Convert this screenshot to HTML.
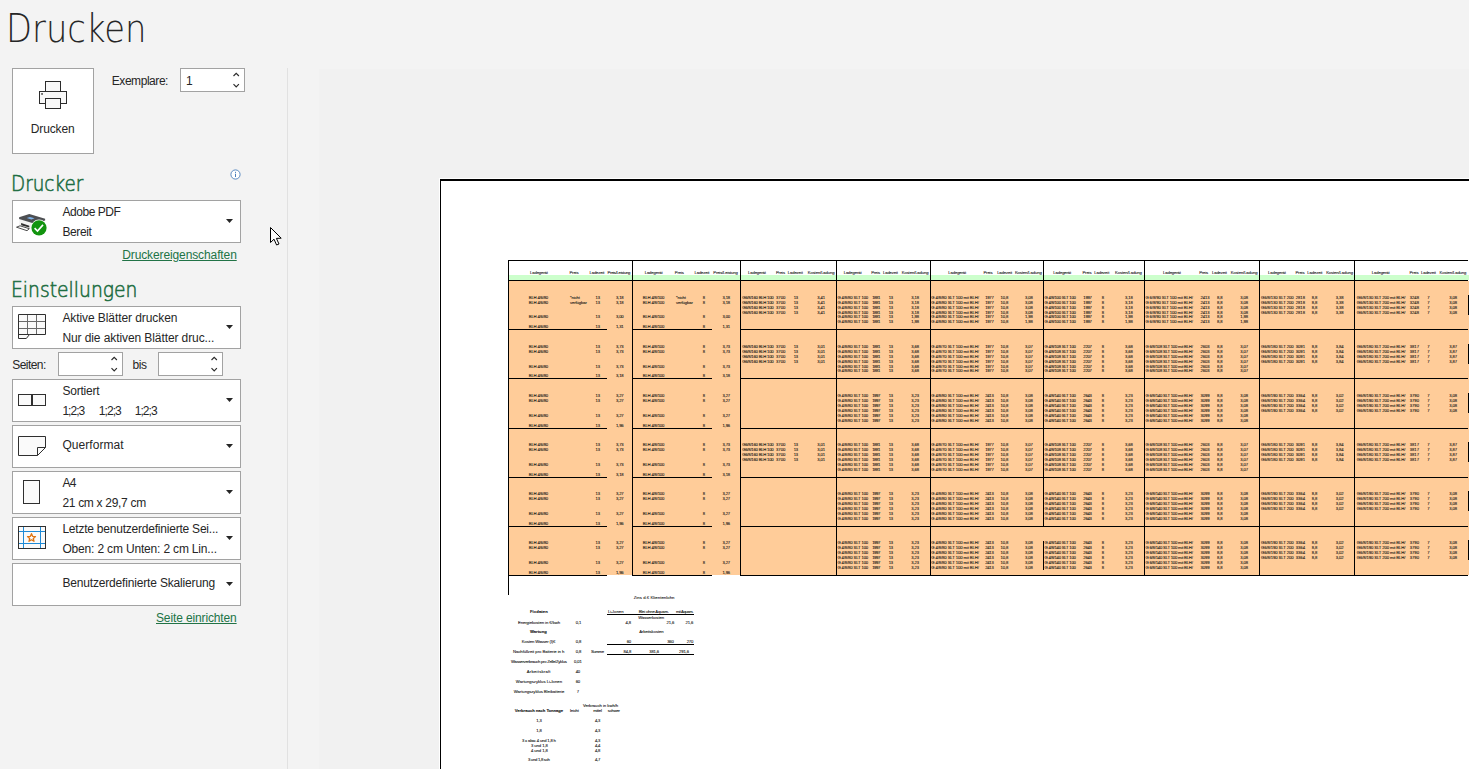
<!DOCTYPE html>
<html lang="de"><head><meta charset="utf-8"><title>Drucken</title>
<style>
*{box-sizing:border-box;margin:0;padding:0}
html,body{width:1469px;height:769px;overflow:hidden;background:#f3f3f3;font-family:"Liberation Sans",sans-serif;color:#262626}
.abs{position:absolute}
.t{position:absolute;white-space:nowrap;font-size:12px;line-height:14px;letter-spacing:-0.3px;color:#262626}
.title{position:absolute;left:5.6px;top:0.7px;font-family:"DejaVu Sans","DejaVu Sans Light","Liberation Sans",sans-serif;font-weight:200;font-size:39.4px;line-height:54px;color:#262626;white-space:nowrap;transform-origin:0 0;transform:scaleX(0.858)}
.h{position:absolute;left:10.6px;font-family:"DejaVu Sans","DejaVu Sans Light","Liberation Sans",sans-serif;font-weight:200;font-size:21px;line-height:28px;color:#1e6e42;-webkit-text-stroke:0.6px #1e6e42;white-space:nowrap;transform-origin:0 0;transform:scaleX(0.84)}
.box{position:absolute;left:12px;width:229px;height:43px;background:#fff;border:1px solid #a2a2a2}
.spin{position:absolute;height:24px;background:#fff;border:1px solid #a2a2a2}
.arr{position:absolute;width:7px;height:4px}
.lnk{position:absolute;white-space:nowrap;font-size:12px;line-height:14px;letter-spacing:-0.15px;color:#217346;text-decoration:underline}
.c{position:absolute;white-space:nowrap;font-size:4.2px;line-height:5px;color:#151515;-webkit-text-stroke:0.09px #151515}
.c.b{font-weight:bold}
.r{position:absolute}
#prev{position:absolute;left:319px;top:69px;width:1150px;height:700px;background:#f1f1f1;overflow:hidden}
#page{position:absolute;left:121px;top:110px;width:1100px;height:700px;background:#fff;border-left:1px solid #000;border-top:2px solid #000;box-shadow:-1px -1px 0 0 #fff}
</style></head>
<body>
<div class="title" id="ttl">Drucken</div>
<div class="abs" style="left:12px;top:68px;width:82px;height:86px;background:#fff;border:1px solid #a2a2a2"></div>
<svg class="abs" style="left:36px;top:80px" width="32" height="30" viewBox="0 0 32 30" fill="none" stroke="#2b2b2b" stroke-width="1">
<rect x="9.5" y="1.5" width="15" height="10" fill="#f8f8f8"/>
<rect x="3.5" y="11.5" width="27" height="12" fill="#f8f8f8"/>
<rect x="9.5" y="18.5" width="15" height="10" fill="#f8f8f8"/>
<rect x="5.3" y="13.2" width="1.5" height="1.5" fill="#1a1a1a" stroke="none"/>
</svg>
<div class="t" style="left:30.8px;top:122px;letter-spacing:-0.13px;">Drucken</div>
<div class="t" style="left:111.8px;top:74px;letter-spacing:-0.45px;">Exemplare:</div>
<div class="spin" style="left:180px;top:68px;width:65px"></div>
<div class="t" style="left:186px;top:74px">1</div>
<svg class="abs" style="left:233px;top:72px" width="7" height="5" viewBox="0 0 7 5" fill="none" stroke="#2b2b2b" stroke-width="1.15"><path d="M0.5 4 L3.2 1.3 L5.9 4"/></svg>
<svg class="abs" style="left:233px;top:83px" width="7" height="5" viewBox="0 0 7 5" fill="none" stroke="#2b2b2b" stroke-width="1.15"><path d="M0.5 1.2 L3.2 3.9 L5.9 1.2"/></svg>
<div class="abs" style="left:287px;top:68px;width:1px;height:701px;background:#e1e1e1"></div>
<div class="h" style="top:170px;transform:scaleX(0.874)">Drucker</div>
<svg class="abs" style="left:230px;top:169px" width="11" height="11" viewBox="0 0 11 11"><circle cx="5.5" cy="5.5" r="4.6" fill="#fff" stroke="#4a7ebb" stroke-width="0.9"/><rect x="5" y="4.7" width="1" height="3.3" fill="#4a7ebb"/><rect x="5" y="2.8" width="1" height="1.1" fill="#4a7ebb"/></svg>
<div class="box" style="top:200px"></div>
<svg class="abs" style="left:16px;top:212px" width="32" height="24" viewBox="0 0 32 24">
<path d="M3.1 7 L3.1 13.6 L13.3 17 L20 15 L29 8.5 L29 6.7 L13.3 2 Z" fill="#f4f4f4"/>
<path d="M3.1 5.3 L13.3 2 L29.1 6.7 L29.1 8.4 L18 11.5 L3.1 7.1 Z" fill="#4d4f52"/>
<path d="M10.7 6.1 L13.9 5 L18.6 6.2 L15.4 7.4 Z" fill="#7fb4ee"/>
<path d="M5.1 11 L13.3 13.7 L13.3 15.6 L5.1 13.2 Z" fill="#2e2e2e"/>
<path d="M0.5 15.2 L4 13.8 L13.3 16.7 L11 18.7 Z" fill="#fdfdfd" stroke="#3a3a3a" stroke-width="0.9"/>
<circle cx="23" cy="15.8" r="8.2" fill="#fff"/>
<circle cx="23" cy="15.8" r="7.6" fill="#12940f"/>
<path d="M18.6 16.1 L21.5 19 L27 12.9" fill="none" stroke="#fff" stroke-width="1.6"/>
</svg>
<div class="t" style="left:62.4px;top:205px;letter-spacing:-0.44px;">Adobe PDF</div>
<div class="t" style="left:62.4px;top:225px;letter-spacing:-0.39px;">Bereit</div>
<svg class="arr" style="left:226px;top:219px" viewBox="0 0 7 4"><path d="M0 0 H7 L3.5 4 Z" fill="#262626"/></svg>
<div class="lnk" style="left:122.2px;top:248px;letter-spacing:-0.11px;">Druckereigenschaften</div>
<svg class="abs" style="left:269px;top:226px" width="15" height="21" viewBox="0 0 15 21"><path d="M1.5 1.5 L1.5 16.5 L5 13.2 L7.6 19 L10 18 L7.4 12.4 L12.2 12.2 Z" fill="#fff" stroke="#000" stroke-width="1" stroke-linejoin="miter"/></svg>
<div class="h" style="top:276px;transform:scaleX(0.893)">Einstellungen</div>
<div class="box" style="top:306px"></div>
<svg class="arr" style="left:226px;top:325px" viewBox="0 0 7 4"><path d="M0 0 H7 L3.5 4 Z" fill="#262626"/></svg>
<div class="box" style="top:379px"></div>
<svg class="arr" style="left:226px;top:398px" viewBox="0 0 7 4"><path d="M0 0 H7 L3.5 4 Z" fill="#262626"/></svg>
<div class="box" style="top:425px"></div>
<svg class="arr" style="left:226px;top:444px" viewBox="0 0 7 4"><path d="M0 0 H7 L3.5 4 Z" fill="#262626"/></svg>
<div class="box" style="top:471px"></div>
<svg class="arr" style="left:226px;top:490px" viewBox="0 0 7 4"><path d="M0 0 H7 L3.5 4 Z" fill="#262626"/></svg>
<div class="box" style="top:517px"></div>
<svg class="arr" style="left:226px;top:536px" viewBox="0 0 7 4"><path d="M0 0 H7 L3.5 4 Z" fill="#262626"/></svg>
<div class="box" style="top:563px"></div>
<svg class="arr" style="left:226px;top:582px" viewBox="0 0 7 4"><path d="M0 0 H7 L3.5 4 Z" fill="#262626"/></svg>
<svg class="abs" style="left:18px;top:314px" width="30" height="26" viewBox="0 0 30 26" fill="none" stroke="#2f2f2f" stroke-width="1">
<path d="M0.5 0.5 H27.5 V20.5 H11.5 L8.3 24.5 H0.5 Z" fill="#fafafa"/>
<path d="M1 7.5 H27 M1 14.5 H27 M9.5 1 V20 M18.5 1 V20" stroke="#6a6a6a"/>
<path d="M0.5 20.5 H11.5"/>
</svg>
<div class="t" style="left:62.4px;top:311px;letter-spacing:-0.08px;">Aktive Blätter drucken</div>
<div class="t" style="left:62.4px;top:331px;letter-spacing:-0.09px;">Nur die aktiven Blätter druc...</div>
<div class="t" style="left:12.2px;top:358px;letter-spacing:-0.54px;">Seiten:</div>
<div class="spin" style="left:58px;top:352px;width:65px"></div>
<svg class="abs" style="left:111px;top:356px" width="7" height="5" viewBox="0 0 7 5" fill="none" stroke="#2b2b2b" stroke-width="1.15"><path d="M0.5 4 L3.2 1.3 L5.9 4"/></svg>
<svg class="abs" style="left:111px;top:367px" width="7" height="5" viewBox="0 0 7 5" fill="none" stroke="#2b2b2b" stroke-width="1.15"><path d="M0.5 1.2 L3.2 3.9 L5.9 1.2"/></svg>
<div class="t" style="left:132.6px;top:358px;letter-spacing:-0.52px;">bis</div>
<div class="spin" style="left:158px;top:352px;width:65px"></div>
<svg class="abs" style="left:211px;top:356px" width="7" height="5" viewBox="0 0 7 5" fill="none" stroke="#2b2b2b" stroke-width="1.15"><path d="M0.5 4 L3.2 1.3 L5.9 4"/></svg>
<svg class="abs" style="left:211px;top:367px" width="7" height="5" viewBox="0 0 7 5" fill="none" stroke="#2b2b2b" stroke-width="1.15"><path d="M0.5 1.2 L3.2 3.9 L5.9 1.2"/></svg>
<svg class="abs" style="left:18px;top:394px" width="30" height="14" viewBox="0 0 30 14" fill="#fafafa" stroke="#2f2f2f" stroke-width="1"><rect x="0.5" y="0.5" width="13" height="11"/><rect x="14.5" y="0.5" width="13" height="11"/></svg>
<div class="t" style="left:62.4px;top:384px;letter-spacing:-0.21px;">Sortiert</div>
<div class="t" style="left:62.4px;top:404px;letter-spacing:-0.95px;">1;2;3</div>
<div class="t" style="left:98.8px;top:404px;letter-spacing:-0.95px;">1;2;3</div>
<div class="t" style="left:134.7px;top:404px;letter-spacing:-0.95px;">1;2;3</div>
<svg class="abs" style="left:18px;top:436px" width="30" height="22" viewBox="0 0 30 22" fill="#fafafa" stroke="#2f2f2f" stroke-width="1"><path d="M0.5 0.5 H27.5 V11.5 L19.5 19.5 H0.5 Z"/><path d="M27.5 11.5 H19.5 V19.5" fill="none"/></svg>
<div class="t" style="left:62.4px;top:438px;letter-spacing:0.05px;">Querformat</div>
<svg class="abs" style="left:23px;top:480px" width="19" height="26" viewBox="0 0 19 26" fill="#fafafa" stroke="#2f2f2f" stroke-width="1"><rect x="0.5" y="0.5" width="16" height="23"/></svg>
<div class="t" style="left:62.4px;top:476px;letter-spacing:-0.68px;">A4</div>
<div class="t" style="left:62.4px;top:496px;letter-spacing:-0.30px;">21 cm x 29,7 cm</div>
<svg class="abs" style="left:18px;top:526px" width="30" height="24" viewBox="0 0 30 24" fill="none" stroke-width="1">
<rect x="0.5" y="0.5" width="27" height="22" fill="#fafafa" stroke="#2f2f2f"/>
<path d="M5.5 1 V22 M22.5 1 V22 M1 5.5 H27 M1 17.5 H27" stroke="#1e8ad6"/>
<path d="M13.50 7.70 L14.62 10.36 L17.49 10.60 L15.31 12.49 L15.97 15.30 L13.50 13.80 L11.03 15.30 L11.69 12.49 L9.51 10.60 L12.38 10.36 Z" stroke="#e07410" stroke-width="1.3" stroke-linejoin="round" fill="#fafafa"/>
</svg>
<div class="t" style="left:62.4px;top:522px;letter-spacing:-0.22px;">Letzte benutzerdefinierte Sei...</div>
<div class="t" style="left:62.4px;top:542px;letter-spacing:-0.17px;">Oben: 2 cm Unten: 2 cm Lin...</div>
<div class="t" style="left:62.4px;top:576px;letter-spacing:-0.17px;">Benutzerdefinierte Skalierung</div>
<div class="lnk" style="left:156px;top:611px;letter-spacing:-0.13px;">Seite einrichten</div>
<div id="prev"><div id="page"><div class="abs" style="left:-441px;top:-181px;width:1469px;height:769px">
<div class="r" style="left:509px;top:261px;width:960px;height:14px;background:#fff"></div>
<div class="r" style="left:509px;top:275px;width:960px;height:5px;background:#ccffcc"></div>
<div class="r" style="left:509px;top:281px;width:960px;height:294px;background:#ffcc99"></div>
<div class="r" style="left:508px;top:260px;width:960px;height:1px;background:#000"></div>
<div class="r" style="left:508px;top:280px;width:960px;height:1px;background:#000"></div>
<div class="r" style="left:508px;top:329px;width:99px;height:1px;background:#000"></div>
<div class="r" style="left:632px;top:329px;width:80px;height:1px;background:#000"></div>
<div class="r" style="left:740px;top:329px;width:728px;height:1px;background:#000"></div>
<div class="r" style="left:508px;top:378px;width:99px;height:1px;background:#000"></div>
<div class="r" style="left:632px;top:378px;width:80px;height:1px;background:#000"></div>
<div class="r" style="left:740px;top:378px;width:728px;height:1px;background:#000"></div>
<div class="r" style="left:508px;top:428px;width:99px;height:1px;background:#000"></div>
<div class="r" style="left:632px;top:428px;width:80px;height:1px;background:#000"></div>
<div class="r" style="left:740px;top:428px;width:728px;height:1px;background:#000"></div>
<div class="r" style="left:508px;top:477px;width:99px;height:1px;background:#000"></div>
<div class="r" style="left:632px;top:477px;width:80px;height:1px;background:#000"></div>
<div class="r" style="left:740px;top:477px;width:728px;height:1px;background:#000"></div>
<div class="r" style="left:508px;top:526px;width:99px;height:1px;background:#000"></div>
<div class="r" style="left:632px;top:526px;width:80px;height:1px;background:#000"></div>
<div class="r" style="left:740px;top:526px;width:728px;height:1px;background:#000"></div>
<div class="r" style="left:508px;top:575px;width:99px;height:1px;background:#000"></div>
<div class="r" style="left:632px;top:575px;width:80px;height:1px;background:#000"></div>
<div class="r" style="left:740px;top:575px;width:728px;height:1px;background:#000"></div>
<div class="r" style="left:508px;top:260px;width:1px;height:316px;background:#000"></div>
<div class="r" style="left:632px;top:260px;width:1px;height:316px;background:#000"></div>
<div class="r" style="left:740px;top:260px;width:1px;height:316px;background:#000"></div>
<div class="r" style="left:836px;top:260px;width:1px;height:316px;background:#000"></div>
<div class="r" style="left:930px;top:260px;width:1px;height:316px;background:#000"></div>
<div class="r" style="left:1043px;top:260px;width:1px;height:267px;background:#000"></div>
<div class="r" style="left:1043px;top:541px;width:1px;height:29px;background:#000"></div>
<div class="r" style="left:1144px;top:260px;width:1px;height:316px;background:#000"></div>
<div class="r" style="left:1259px;top:260px;width:1px;height:316px;background:#000"></div>
<div class="r" style="left:1354px;top:260px;width:1px;height:316px;background:#000"></div>
<div class="r" style="left:508px;top:576px;width:1px;height:19px;background:#000"></div>
<div class="r" style="left:1468px;top:295px;width:1px;height:20px;background:#000"></div>
<div class="r" style="left:1468px;top:344px;width:1px;height:20px;background:#000"></div>
<div class="r" style="left:1468px;top:393px;width:1px;height:20px;background:#000"></div>
<div class="r" style="left:1468px;top:442px;width:1px;height:20px;background:#000"></div>
<div class="r" style="left:1468px;top:491px;width:1px;height:20px;background:#000"></div>
<div class="r" style="left:1468px;top:540px;width:1px;height:20px;background:#000"></div>
<div class="c" style="left:529.99px;top:270.20px;letter-spacing:-0.113px;">Ladegerät</div>
<div class="c" style="left:569.44px;top:270.20px;letter-spacing:-0.114px;">Preis</div>
<div class="c" style="left:589.44px;top:270.20px;letter-spacing:-0.108px;">Ladezeit</div>
<div class="c" style="left:607.50px;top:270.20px;letter-spacing:-0.278px;">Preis/Leistung</div>
<div class="c" style="left:528.80px;top:295.00px;letter-spacing:-0.179px;">BLH 4/6/80</div>
<div class="c" style="left:595.58px;top:295.00px;letter-spacing:-0.222px;">13</div>
<div class="c" style="left:615.91px;top:295.00px;letter-spacing:-0.130px;">3,18</div>
<div class="c" style="left:528.80px;top:300.10px;letter-spacing:-0.179px;">BLH 4/6/80</div>
<div class="c" style="left:595.58px;top:300.10px;letter-spacing:-0.222px;">13</div>
<div class="c" style="left:615.91px;top:300.10px;letter-spacing:-0.130px;">3,18</div>
<div class="c" style="left:528.80px;top:313.90px;letter-spacing:-0.179px;">BLH 4/6/80</div>
<div class="c" style="left:595.58px;top:313.90px;letter-spacing:-0.222px;">13</div>
<div class="c" style="left:615.91px;top:313.90px;letter-spacing:-0.130px;">3,00</div>
<div class="c" style="left:528.80px;top:323.80px;letter-spacing:-0.179px;">BLH 4/6/80</div>
<div class="c" style="left:595.58px;top:323.80px;letter-spacing:-0.222px;">13</div>
<div class="c" style="left:615.91px;top:323.80px;letter-spacing:-0.130px;">1,31</div>
<div class="c" style="left:570.00px;top:295.00px;letter-spacing:-0.100px;">*nicht</div>
<div class="c" style="left:570.00px;top:300.10px;letter-spacing:-0.106px;">verfügbar</div>
<div class="c" style="left:528.80px;top:344.20px;letter-spacing:-0.179px;">BLH 4/6/80</div>
<div class="c" style="left:595.58px;top:344.20px;letter-spacing:-0.222px;">13</div>
<div class="c" style="left:615.91px;top:344.20px;letter-spacing:-0.130px;">3,73</div>
<div class="c" style="left:528.80px;top:349.00px;letter-spacing:-0.179px;">BLH 4/6/80</div>
<div class="c" style="left:595.58px;top:349.00px;letter-spacing:-0.222px;">13</div>
<div class="c" style="left:615.91px;top:349.00px;letter-spacing:-0.130px;">3,73</div>
<div class="c" style="left:528.80px;top:363.90px;letter-spacing:-0.179px;">BLH 4/6/80</div>
<div class="c" style="left:595.58px;top:363.90px;letter-spacing:-0.222px;">13</div>
<div class="c" style="left:615.91px;top:363.90px;letter-spacing:-0.130px;">3,73</div>
<div class="c" style="left:528.80px;top:372.80px;letter-spacing:-0.179px;">BLH 4/6/80</div>
<div class="c" style="left:595.58px;top:372.80px;letter-spacing:-0.222px;">13</div>
<div class="c" style="left:615.91px;top:372.80px;letter-spacing:-0.130px;">3,18</div>
<div class="c" style="left:528.80px;top:393.10px;letter-spacing:-0.179px;">BLH 4/6/80</div>
<div class="c" style="left:595.58px;top:393.10px;letter-spacing:-0.222px;">13</div>
<div class="c" style="left:615.91px;top:393.10px;letter-spacing:-0.130px;">3,27</div>
<div class="c" style="left:528.80px;top:398.00px;letter-spacing:-0.179px;">BLH 4/6/80</div>
<div class="c" style="left:595.58px;top:398.00px;letter-spacing:-0.222px;">13</div>
<div class="c" style="left:615.91px;top:398.00px;letter-spacing:-0.130px;">3,27</div>
<div class="c" style="left:528.80px;top:413.00px;letter-spacing:-0.179px;">BLH 4/6/80</div>
<div class="c" style="left:595.58px;top:413.00px;letter-spacing:-0.222px;">13</div>
<div class="c" style="left:615.91px;top:413.00px;letter-spacing:-0.130px;">3,27</div>
<div class="c" style="left:528.80px;top:422.90px;letter-spacing:-0.179px;">BLH 4/6/80</div>
<div class="c" style="left:595.58px;top:422.90px;letter-spacing:-0.222px;">13</div>
<div class="c" style="left:615.91px;top:422.90px;letter-spacing:-0.130px;">1,96</div>
<div class="c" style="left:528.80px;top:442.10px;letter-spacing:-0.179px;">BLH 4/6/80</div>
<div class="c" style="left:595.58px;top:442.10px;letter-spacing:-0.222px;">13</div>
<div class="c" style="left:615.91px;top:442.10px;letter-spacing:-0.130px;">3,73</div>
<div class="c" style="left:528.80px;top:446.90px;letter-spacing:-0.179px;">BLH 4/6/80</div>
<div class="c" style="left:595.58px;top:446.90px;letter-spacing:-0.222px;">13</div>
<div class="c" style="left:615.91px;top:446.90px;letter-spacing:-0.130px;">3,73</div>
<div class="c" style="left:528.80px;top:461.70px;letter-spacing:-0.179px;">BLH 4/6/80</div>
<div class="c" style="left:595.58px;top:461.70px;letter-spacing:-0.222px;">13</div>
<div class="c" style="left:615.91px;top:461.70px;letter-spacing:-0.130px;">3,73</div>
<div class="c" style="left:528.80px;top:471.60px;letter-spacing:-0.179px;">BLH 4/6/80</div>
<div class="c" style="left:595.58px;top:471.60px;letter-spacing:-0.222px;">13</div>
<div class="c" style="left:615.91px;top:471.60px;letter-spacing:-0.130px;">3,18</div>
<div class="c" style="left:528.80px;top:491.20px;letter-spacing:-0.179px;">BLH 4/6/80</div>
<div class="c" style="left:595.58px;top:491.20px;letter-spacing:-0.222px;">13</div>
<div class="c" style="left:615.91px;top:491.20px;letter-spacing:-0.130px;">3,27</div>
<div class="c" style="left:528.80px;top:496.00px;letter-spacing:-0.179px;">BLH 4/6/80</div>
<div class="c" style="left:595.58px;top:496.00px;letter-spacing:-0.222px;">13</div>
<div class="c" style="left:615.91px;top:496.00px;letter-spacing:-0.130px;">3,27</div>
<div class="c" style="left:528.80px;top:510.80px;letter-spacing:-0.179px;">BLH 4/6/80</div>
<div class="c" style="left:595.58px;top:510.80px;letter-spacing:-0.222px;">13</div>
<div class="c" style="left:615.91px;top:510.80px;letter-spacing:-0.130px;">3,27</div>
<div class="c" style="left:528.80px;top:520.80px;letter-spacing:-0.179px;">BLH 4/6/80</div>
<div class="c" style="left:595.58px;top:520.80px;letter-spacing:-0.222px;">13</div>
<div class="c" style="left:615.91px;top:520.80px;letter-spacing:-0.130px;">1,96</div>
<div class="c" style="left:528.80px;top:539.80px;letter-spacing:-0.179px;">BLH 4/6/80</div>
<div class="c" style="left:595.58px;top:539.80px;letter-spacing:-0.222px;">13</div>
<div class="c" style="left:615.91px;top:539.80px;letter-spacing:-0.130px;">3,27</div>
<div class="c" style="left:528.80px;top:544.80px;letter-spacing:-0.179px;">BLH 4/6/80</div>
<div class="c" style="left:595.58px;top:544.80px;letter-spacing:-0.222px;">13</div>
<div class="c" style="left:615.91px;top:544.80px;letter-spacing:-0.130px;">3,27</div>
<div class="c" style="left:528.80px;top:559.70px;letter-spacing:-0.179px;">BLH 4/6/80</div>
<div class="c" style="left:595.58px;top:559.70px;letter-spacing:-0.222px;">13</div>
<div class="c" style="left:615.91px;top:559.70px;letter-spacing:-0.130px;">3,27</div>
<div class="c" style="left:528.80px;top:569.60px;letter-spacing:-0.179px;">BLH 4/6/80</div>
<div class="c" style="left:595.58px;top:569.60px;letter-spacing:-0.222px;">13</div>
<div class="c" style="left:615.91px;top:569.60px;letter-spacing:-0.130px;">1,96</div>
<div class="c" style="left:644.69px;top:270.20px;letter-spacing:-0.113px;">Ladegerät</div>
<div class="c" style="left:674.84px;top:270.20px;letter-spacing:-0.114px;">Preis</div>
<div class="c" style="left:694.44px;top:270.20px;letter-spacing:-0.108px;">Ladezeit</div>
<div class="c" style="left:713.35px;top:270.20px;letter-spacing:-0.163px;">Preis/Leistung</div>
<div class="c" style="left:642.85px;top:295.00px;letter-spacing:-0.185px;">BLH 4/8/100</div>
<div class="c" style="left:702.83px;top:295.00px;">8</div>
<div class="c" style="left:722.41px;top:295.00px;letter-spacing:-0.130px;">3,18</div>
<div class="c" style="left:642.85px;top:300.10px;letter-spacing:-0.185px;">BLH 4/8/100</div>
<div class="c" style="left:702.83px;top:300.10px;">8</div>
<div class="c" style="left:722.41px;top:300.10px;letter-spacing:-0.130px;">3,18</div>
<div class="c" style="left:642.85px;top:313.90px;letter-spacing:-0.185px;">BLH 4/8/100</div>
<div class="c" style="left:702.83px;top:313.90px;">8</div>
<div class="c" style="left:722.41px;top:313.90px;letter-spacing:-0.130px;">3,00</div>
<div class="c" style="left:642.85px;top:323.80px;letter-spacing:-0.185px;">BLH 4/8/100</div>
<div class="c" style="left:702.83px;top:323.80px;">8</div>
<div class="c" style="left:722.41px;top:323.80px;letter-spacing:-0.130px;">1,31</div>
<div class="c" style="left:676.00px;top:295.00px;letter-spacing:-0.100px;">*nicht</div>
<div class="c" style="left:676.00px;top:300.10px;letter-spacing:-0.106px;">verfügbar</div>
<div class="c" style="left:642.85px;top:344.20px;letter-spacing:-0.185px;">BLH 4/8/100</div>
<div class="c" style="left:702.83px;top:344.20px;">8</div>
<div class="c" style="left:722.41px;top:344.20px;letter-spacing:-0.130px;">3,73</div>
<div class="c" style="left:642.85px;top:349.00px;letter-spacing:-0.185px;">BLH 4/8/100</div>
<div class="c" style="left:702.83px;top:349.00px;">8</div>
<div class="c" style="left:722.41px;top:349.00px;letter-spacing:-0.130px;">3,73</div>
<div class="c" style="left:642.85px;top:363.90px;letter-spacing:-0.185px;">BLH 4/8/100</div>
<div class="c" style="left:702.83px;top:363.90px;">8</div>
<div class="c" style="left:722.41px;top:363.90px;letter-spacing:-0.130px;">3,73</div>
<div class="c" style="left:642.85px;top:372.80px;letter-spacing:-0.185px;">BLH 4/8/100</div>
<div class="c" style="left:702.83px;top:372.80px;">8</div>
<div class="c" style="left:722.41px;top:372.80px;letter-spacing:-0.130px;">3,18</div>
<div class="c" style="left:642.85px;top:393.10px;letter-spacing:-0.185px;">BLH 4/8/100</div>
<div class="c" style="left:702.83px;top:393.10px;">8</div>
<div class="c" style="left:722.41px;top:393.10px;letter-spacing:-0.130px;">3,27</div>
<div class="c" style="left:642.85px;top:398.00px;letter-spacing:-0.185px;">BLH 4/8/100</div>
<div class="c" style="left:702.83px;top:398.00px;">8</div>
<div class="c" style="left:722.41px;top:398.00px;letter-spacing:-0.130px;">3,27</div>
<div class="c" style="left:642.85px;top:413.00px;letter-spacing:-0.185px;">BLH 4/8/100</div>
<div class="c" style="left:702.83px;top:413.00px;">8</div>
<div class="c" style="left:722.41px;top:413.00px;letter-spacing:-0.130px;">3,27</div>
<div class="c" style="left:642.85px;top:422.90px;letter-spacing:-0.185px;">BLH 4/8/100</div>
<div class="c" style="left:702.83px;top:422.90px;">8</div>
<div class="c" style="left:722.41px;top:422.90px;letter-spacing:-0.130px;">1,96</div>
<div class="c" style="left:642.85px;top:442.10px;letter-spacing:-0.185px;">BLH 4/8/100</div>
<div class="c" style="left:702.83px;top:442.10px;">8</div>
<div class="c" style="left:722.41px;top:442.10px;letter-spacing:-0.130px;">3,73</div>
<div class="c" style="left:642.85px;top:446.90px;letter-spacing:-0.185px;">BLH 4/8/100</div>
<div class="c" style="left:702.83px;top:446.90px;">8</div>
<div class="c" style="left:722.41px;top:446.90px;letter-spacing:-0.130px;">3,73</div>
<div class="c" style="left:642.85px;top:461.70px;letter-spacing:-0.185px;">BLH 4/8/100</div>
<div class="c" style="left:702.83px;top:461.70px;">8</div>
<div class="c" style="left:722.41px;top:461.70px;letter-spacing:-0.130px;">3,73</div>
<div class="c" style="left:642.85px;top:471.60px;letter-spacing:-0.185px;">BLH 4/8/100</div>
<div class="c" style="left:702.83px;top:471.60px;">8</div>
<div class="c" style="left:722.41px;top:471.60px;letter-spacing:-0.130px;">3,18</div>
<div class="c" style="left:642.85px;top:491.20px;letter-spacing:-0.185px;">BLH 4/8/100</div>
<div class="c" style="left:702.83px;top:491.20px;">8</div>
<div class="c" style="left:722.41px;top:491.20px;letter-spacing:-0.130px;">3,27</div>
<div class="c" style="left:642.85px;top:496.00px;letter-spacing:-0.185px;">BLH 4/8/100</div>
<div class="c" style="left:702.83px;top:496.00px;">8</div>
<div class="c" style="left:722.41px;top:496.00px;letter-spacing:-0.130px;">3,27</div>
<div class="c" style="left:642.85px;top:510.80px;letter-spacing:-0.185px;">BLH 4/8/100</div>
<div class="c" style="left:702.83px;top:510.80px;">8</div>
<div class="c" style="left:722.41px;top:510.80px;letter-spacing:-0.130px;">3,27</div>
<div class="c" style="left:642.85px;top:520.80px;letter-spacing:-0.185px;">BLH 4/8/100</div>
<div class="c" style="left:702.83px;top:520.80px;">8</div>
<div class="c" style="left:722.41px;top:520.80px;letter-spacing:-0.130px;">1,96</div>
<div class="c" style="left:642.85px;top:539.80px;letter-spacing:-0.185px;">BLH 4/8/100</div>
<div class="c" style="left:702.83px;top:539.80px;">8</div>
<div class="c" style="left:722.41px;top:539.80px;letter-spacing:-0.130px;">3,27</div>
<div class="c" style="left:642.85px;top:544.80px;letter-spacing:-0.185px;">BLH 4/8/100</div>
<div class="c" style="left:702.83px;top:544.80px;">8</div>
<div class="c" style="left:722.41px;top:544.80px;letter-spacing:-0.130px;">3,27</div>
<div class="c" style="left:642.85px;top:559.70px;letter-spacing:-0.185px;">BLH 4/8/100</div>
<div class="c" style="left:702.83px;top:559.70px;">8</div>
<div class="c" style="left:722.41px;top:559.70px;letter-spacing:-0.130px;">3,27</div>
<div class="c" style="left:642.85px;top:569.60px;letter-spacing:-0.185px;">BLH 4/8/100</div>
<div class="c" style="left:702.83px;top:569.60px;">8</div>
<div class="c" style="left:722.41px;top:569.60px;letter-spacing:-0.130px;">1,96</div>
<div class="c" style="left:747.99px;top:270.20px;letter-spacing:-0.113px;">Ladegerät</div>
<div class="c" style="left:775.94px;top:270.20px;letter-spacing:-0.114px;">Preis</div>
<div class="c" style="left:787.74px;top:270.20px;letter-spacing:-0.108px;">Ladezeit</div>
<div class="c" style="left:807.74px;top:270.20px;letter-spacing:-0.112px;">Kosten/Ladung</div>
<div class="c" style="left:742.20px;top:295.00px;letter-spacing:-0.213px;">G6/8/160 BLH 100</div>
<div class="c" style="left:776.00px;top:295.00px;letter-spacing:0.019px;">3700</div>
<div class="c" style="left:793.78px;top:295.00px;letter-spacing:-0.222px;">13</div>
<div class="c" style="left:817.31px;top:295.00px;letter-spacing:-0.130px;">3,41</div>
<div class="c" style="left:742.20px;top:300.10px;letter-spacing:-0.213px;">G6/8/160 BLH 100</div>
<div class="c" style="left:776.00px;top:300.10px;letter-spacing:0.019px;">3700</div>
<div class="c" style="left:793.78px;top:300.10px;letter-spacing:-0.222px;">13</div>
<div class="c" style="left:817.31px;top:300.10px;letter-spacing:-0.130px;">3,41</div>
<div class="c" style="left:742.20px;top:305.00px;letter-spacing:-0.213px;">G6/8/160 BLH 100</div>
<div class="c" style="left:776.00px;top:305.00px;letter-spacing:0.019px;">3700</div>
<div class="c" style="left:793.78px;top:305.00px;letter-spacing:-0.222px;">13</div>
<div class="c" style="left:817.31px;top:305.00px;letter-spacing:-0.130px;">3,41</div>
<div class="c" style="left:742.20px;top:310.00px;letter-spacing:-0.213px;">G6/8/160 BLH 100</div>
<div class="c" style="left:776.00px;top:310.00px;letter-spacing:0.019px;">3700</div>
<div class="c" style="left:793.78px;top:310.00px;letter-spacing:-0.222px;">13</div>
<div class="c" style="left:817.31px;top:310.00px;letter-spacing:-0.130px;">3,41</div>
<div class="c" style="left:742.20px;top:344.20px;letter-spacing:-0.213px;">G6/8/160 BLH 100</div>
<div class="c" style="left:776.00px;top:344.20px;letter-spacing:0.019px;">3700</div>
<div class="c" style="left:793.78px;top:344.20px;letter-spacing:-0.222px;">13</div>
<div class="c" style="left:817.31px;top:344.20px;letter-spacing:-0.130px;">3,01</div>
<div class="c" style="left:742.20px;top:349.00px;letter-spacing:-0.213px;">G6/8/160 BLH 100</div>
<div class="c" style="left:776.00px;top:349.00px;letter-spacing:0.019px;">3700</div>
<div class="c" style="left:793.78px;top:349.00px;letter-spacing:-0.222px;">13</div>
<div class="c" style="left:817.31px;top:349.00px;letter-spacing:-0.130px;">3,01</div>
<div class="c" style="left:742.20px;top:353.90px;letter-spacing:-0.213px;">G6/8/160 BLH 100</div>
<div class="c" style="left:776.00px;top:353.90px;letter-spacing:0.019px;">3700</div>
<div class="c" style="left:793.78px;top:353.90px;letter-spacing:-0.222px;">13</div>
<div class="c" style="left:817.31px;top:353.90px;letter-spacing:-0.130px;">3,01</div>
<div class="c" style="left:742.20px;top:359.00px;letter-spacing:-0.213px;">G6/8/160 BLH 100</div>
<div class="c" style="left:776.00px;top:359.00px;letter-spacing:0.019px;">3700</div>
<div class="c" style="left:793.78px;top:359.00px;letter-spacing:-0.222px;">13</div>
<div class="c" style="left:817.31px;top:359.00px;letter-spacing:-0.130px;">3,01</div>
<div class="c" style="left:742.20px;top:442.10px;letter-spacing:-0.213px;">G6/8/160 BLH 100</div>
<div class="c" style="left:776.00px;top:442.10px;letter-spacing:0.019px;">3700</div>
<div class="c" style="left:793.78px;top:442.10px;letter-spacing:-0.222px;">13</div>
<div class="c" style="left:817.31px;top:442.10px;letter-spacing:-0.130px;">3,01</div>
<div class="c" style="left:742.20px;top:446.90px;letter-spacing:-0.213px;">G6/8/160 BLH 100</div>
<div class="c" style="left:776.00px;top:446.90px;letter-spacing:0.019px;">3700</div>
<div class="c" style="left:793.78px;top:446.90px;letter-spacing:-0.222px;">13</div>
<div class="c" style="left:817.31px;top:446.90px;letter-spacing:-0.130px;">3,01</div>
<div class="c" style="left:742.20px;top:451.90px;letter-spacing:-0.213px;">G6/8/160 BLH 100</div>
<div class="c" style="left:776.00px;top:451.90px;letter-spacing:0.019px;">3700</div>
<div class="c" style="left:793.78px;top:451.90px;letter-spacing:-0.222px;">13</div>
<div class="c" style="left:817.31px;top:451.90px;letter-spacing:-0.130px;">3,01</div>
<div class="c" style="left:742.20px;top:456.70px;letter-spacing:-0.213px;">G6/8/160 BLH 100</div>
<div class="c" style="left:776.00px;top:456.70px;letter-spacing:0.019px;">3700</div>
<div class="c" style="left:793.78px;top:456.70px;letter-spacing:-0.222px;">13</div>
<div class="c" style="left:817.31px;top:456.70px;letter-spacing:-0.130px;">3,01</div>
<div class="c" style="left:843.69px;top:270.20px;letter-spacing:-0.113px;">Ladegerät</div>
<div class="c" style="left:871.14px;top:270.20px;letter-spacing:-0.114px;">Preis</div>
<div class="c" style="left:882.94px;top:270.20px;letter-spacing:-0.108px;">Ladezeit</div>
<div class="c" style="left:901.74px;top:270.20px;letter-spacing:-0.112px;">Kosten/Ladung</div>
<div class="c" style="left:837.40px;top:295.00px;letter-spacing:-0.125px;">G 4/8/80 SLT 100</div>
<div class="c" style="left:872.20px;top:295.00px;letter-spacing:-0.415px;">1881</div>
<div class="c" style="left:888.78px;top:295.00px;letter-spacing:-0.222px;">13</div>
<div class="c" style="left:911.31px;top:295.00px;letter-spacing:-0.130px;">3,18</div>
<div class="c" style="left:837.40px;top:300.10px;letter-spacing:-0.125px;">G 4/8/80 SLT 100</div>
<div class="c" style="left:872.20px;top:300.10px;letter-spacing:-0.415px;">1881</div>
<div class="c" style="left:888.78px;top:300.10px;letter-spacing:-0.222px;">13</div>
<div class="c" style="left:911.31px;top:300.10px;letter-spacing:-0.130px;">3,18</div>
<div class="c" style="left:837.40px;top:305.00px;letter-spacing:-0.125px;">G 4/8/80 SLT 100</div>
<div class="c" style="left:872.20px;top:305.00px;letter-spacing:-0.415px;">1881</div>
<div class="c" style="left:888.78px;top:305.00px;letter-spacing:-0.222px;">13</div>
<div class="c" style="left:911.31px;top:305.00px;letter-spacing:-0.130px;">3,18</div>
<div class="c" style="left:837.40px;top:310.00px;letter-spacing:-0.125px;">G 4/8/80 SLT 100</div>
<div class="c" style="left:872.20px;top:310.00px;letter-spacing:-0.415px;">1881</div>
<div class="c" style="left:888.78px;top:310.00px;letter-spacing:-0.222px;">13</div>
<div class="c" style="left:911.31px;top:310.00px;letter-spacing:-0.130px;">3,18</div>
<div class="c" style="left:837.40px;top:313.90px;letter-spacing:-0.125px;">G 4/8/80 SLT 100</div>
<div class="c" style="left:872.20px;top:313.90px;letter-spacing:-0.415px;">1881</div>
<div class="c" style="left:888.78px;top:313.90px;letter-spacing:-0.222px;">13</div>
<div class="c" style="left:911.31px;top:313.90px;letter-spacing:-0.130px;">1,98</div>
<div class="c" style="left:837.40px;top:318.80px;letter-spacing:-0.125px;">G 4/8/80 SLT 100</div>
<div class="c" style="left:872.20px;top:318.80px;letter-spacing:-0.415px;">1881</div>
<div class="c" style="left:888.78px;top:318.80px;letter-spacing:-0.222px;">13</div>
<div class="c" style="left:911.31px;top:318.80px;letter-spacing:-0.130px;">1,98</div>
<div class="c" style="left:837.40px;top:344.20px;letter-spacing:-0.125px;">G 4/8/80 SLT 100</div>
<div class="c" style="left:872.20px;top:344.20px;letter-spacing:-0.415px;">1881</div>
<div class="c" style="left:888.78px;top:344.20px;letter-spacing:-0.222px;">13</div>
<div class="c" style="left:911.31px;top:344.20px;letter-spacing:-0.130px;">3,68</div>
<div class="c" style="left:837.40px;top:349.00px;letter-spacing:-0.125px;">G 4/8/80 SLT 100</div>
<div class="c" style="left:872.20px;top:349.00px;letter-spacing:-0.415px;">1881</div>
<div class="c" style="left:888.78px;top:349.00px;letter-spacing:-0.222px;">13</div>
<div class="c" style="left:911.31px;top:349.00px;letter-spacing:-0.130px;">3,68</div>
<div class="c" style="left:837.40px;top:353.90px;letter-spacing:-0.125px;">G 4/8/80 SLT 100</div>
<div class="c" style="left:872.20px;top:353.90px;letter-spacing:-0.415px;">1881</div>
<div class="c" style="left:888.78px;top:353.90px;letter-spacing:-0.222px;">13</div>
<div class="c" style="left:911.31px;top:353.90px;letter-spacing:-0.130px;">3,68</div>
<div class="c" style="left:837.40px;top:359.00px;letter-spacing:-0.125px;">G 4/8/80 SLT 100</div>
<div class="c" style="left:872.20px;top:359.00px;letter-spacing:-0.415px;">1881</div>
<div class="c" style="left:888.78px;top:359.00px;letter-spacing:-0.222px;">13</div>
<div class="c" style="left:911.31px;top:359.00px;letter-spacing:-0.130px;">3,68</div>
<div class="c" style="left:837.40px;top:363.90px;letter-spacing:-0.125px;">G 4/8/80 SLT 100</div>
<div class="c" style="left:872.20px;top:363.90px;letter-spacing:-0.415px;">1881</div>
<div class="c" style="left:888.78px;top:363.90px;letter-spacing:-0.222px;">13</div>
<div class="c" style="left:911.31px;top:363.90px;letter-spacing:-0.130px;">3,68</div>
<div class="c" style="left:837.40px;top:367.60px;letter-spacing:-0.125px;">G 4/8/80 SLT 100</div>
<div class="c" style="left:872.20px;top:367.60px;letter-spacing:-0.415px;">1881</div>
<div class="c" style="left:888.78px;top:367.60px;letter-spacing:-0.222px;">13</div>
<div class="c" style="left:911.31px;top:367.60px;letter-spacing:-0.130px;">3,68</div>
<div class="c" style="left:837.40px;top:393.10px;letter-spacing:-0.125px;">G 4/8/80 SLT 100</div>
<div class="c" style="left:872.20px;top:393.10px;letter-spacing:-0.415px;">1997</div>
<div class="c" style="left:888.78px;top:393.10px;letter-spacing:-0.222px;">13</div>
<div class="c" style="left:911.31px;top:393.10px;letter-spacing:-0.130px;">3,23</div>
<div class="c" style="left:837.40px;top:398.00px;letter-spacing:-0.125px;">G 4/8/80 SLT 100</div>
<div class="c" style="left:872.20px;top:398.00px;letter-spacing:-0.415px;">1997</div>
<div class="c" style="left:888.78px;top:398.00px;letter-spacing:-0.222px;">13</div>
<div class="c" style="left:911.31px;top:398.00px;letter-spacing:-0.130px;">3,23</div>
<div class="c" style="left:837.40px;top:403.10px;letter-spacing:-0.125px;">G 4/8/80 SLT 100</div>
<div class="c" style="left:872.20px;top:403.10px;letter-spacing:-0.415px;">1997</div>
<div class="c" style="left:888.78px;top:403.10px;letter-spacing:-0.222px;">13</div>
<div class="c" style="left:911.31px;top:403.10px;letter-spacing:-0.130px;">3,23</div>
<div class="c" style="left:837.40px;top:407.90px;letter-spacing:-0.125px;">G 4/8/80 SLT 100</div>
<div class="c" style="left:872.20px;top:407.90px;letter-spacing:-0.415px;">1997</div>
<div class="c" style="left:888.78px;top:407.90px;letter-spacing:-0.222px;">13</div>
<div class="c" style="left:911.31px;top:407.90px;letter-spacing:-0.130px;">3,23</div>
<div class="c" style="left:837.40px;top:413.00px;letter-spacing:-0.125px;">G 4/8/80 SLT 100</div>
<div class="c" style="left:872.20px;top:413.00px;letter-spacing:-0.415px;">1997</div>
<div class="c" style="left:888.78px;top:413.00px;letter-spacing:-0.222px;">13</div>
<div class="c" style="left:911.31px;top:413.00px;letter-spacing:-0.130px;">3,23</div>
<div class="c" style="left:837.40px;top:417.90px;letter-spacing:-0.125px;">G 4/8/80 SLT 100</div>
<div class="c" style="left:872.20px;top:417.90px;letter-spacing:-0.415px;">1997</div>
<div class="c" style="left:888.78px;top:417.90px;letter-spacing:-0.222px;">13</div>
<div class="c" style="left:911.31px;top:417.90px;letter-spacing:-0.130px;">3,23</div>
<div class="c" style="left:837.40px;top:442.10px;letter-spacing:-0.125px;">G 4/8/80 SLT 100</div>
<div class="c" style="left:872.20px;top:442.10px;letter-spacing:-0.415px;">1881</div>
<div class="c" style="left:888.78px;top:442.10px;letter-spacing:-0.222px;">13</div>
<div class="c" style="left:911.31px;top:442.10px;letter-spacing:-0.130px;">3,68</div>
<div class="c" style="left:837.40px;top:446.90px;letter-spacing:-0.125px;">G 4/8/80 SLT 100</div>
<div class="c" style="left:872.20px;top:446.90px;letter-spacing:-0.415px;">1881</div>
<div class="c" style="left:888.78px;top:446.90px;letter-spacing:-0.222px;">13</div>
<div class="c" style="left:911.31px;top:446.90px;letter-spacing:-0.130px;">3,68</div>
<div class="c" style="left:837.40px;top:451.90px;letter-spacing:-0.125px;">G 4/8/80 SLT 100</div>
<div class="c" style="left:872.20px;top:451.90px;letter-spacing:-0.415px;">1881</div>
<div class="c" style="left:888.78px;top:451.90px;letter-spacing:-0.222px;">13</div>
<div class="c" style="left:911.31px;top:451.90px;letter-spacing:-0.130px;">3,68</div>
<div class="c" style="left:837.40px;top:456.70px;letter-spacing:-0.125px;">G 4/8/80 SLT 100</div>
<div class="c" style="left:872.20px;top:456.70px;letter-spacing:-0.415px;">1881</div>
<div class="c" style="left:888.78px;top:456.70px;letter-spacing:-0.222px;">13</div>
<div class="c" style="left:911.31px;top:456.70px;letter-spacing:-0.130px;">3,68</div>
<div class="c" style="left:837.40px;top:461.70px;letter-spacing:-0.125px;">G 4/8/80 SLT 100</div>
<div class="c" style="left:872.20px;top:461.70px;letter-spacing:-0.415px;">1881</div>
<div class="c" style="left:888.78px;top:461.70px;letter-spacing:-0.222px;">13</div>
<div class="c" style="left:911.31px;top:461.70px;letter-spacing:-0.130px;">3,68</div>
<div class="c" style="left:837.40px;top:466.80px;letter-spacing:-0.125px;">G 4/8/80 SLT 100</div>
<div class="c" style="left:872.20px;top:466.80px;letter-spacing:-0.415px;">1881</div>
<div class="c" style="left:888.78px;top:466.80px;letter-spacing:-0.222px;">13</div>
<div class="c" style="left:911.31px;top:466.80px;letter-spacing:-0.130px;">3,68</div>
<div class="c" style="left:837.40px;top:491.20px;letter-spacing:-0.125px;">G 4/8/80 SLT 100</div>
<div class="c" style="left:872.20px;top:491.20px;letter-spacing:-0.415px;">1997</div>
<div class="c" style="left:888.78px;top:491.20px;letter-spacing:-0.222px;">13</div>
<div class="c" style="left:911.31px;top:491.20px;letter-spacing:-0.130px;">3,23</div>
<div class="c" style="left:837.40px;top:496.00px;letter-spacing:-0.125px;">G 4/8/80 SLT 100</div>
<div class="c" style="left:872.20px;top:496.00px;letter-spacing:-0.415px;">1997</div>
<div class="c" style="left:888.78px;top:496.00px;letter-spacing:-0.222px;">13</div>
<div class="c" style="left:911.31px;top:496.00px;letter-spacing:-0.130px;">3,23</div>
<div class="c" style="left:837.40px;top:501.00px;letter-spacing:-0.125px;">G 4/8/80 SLT 100</div>
<div class="c" style="left:872.20px;top:501.00px;letter-spacing:-0.415px;">1997</div>
<div class="c" style="left:888.78px;top:501.00px;letter-spacing:-0.222px;">13</div>
<div class="c" style="left:911.31px;top:501.00px;letter-spacing:-0.130px;">3,23</div>
<div class="c" style="left:837.40px;top:505.80px;letter-spacing:-0.125px;">G 4/8/80 SLT 100</div>
<div class="c" style="left:872.20px;top:505.80px;letter-spacing:-0.415px;">1997</div>
<div class="c" style="left:888.78px;top:505.80px;letter-spacing:-0.222px;">13</div>
<div class="c" style="left:911.31px;top:505.80px;letter-spacing:-0.130px;">3,23</div>
<div class="c" style="left:837.40px;top:510.80px;letter-spacing:-0.125px;">G 4/8/80 SLT 100</div>
<div class="c" style="left:872.20px;top:510.80px;letter-spacing:-0.415px;">1997</div>
<div class="c" style="left:888.78px;top:510.80px;letter-spacing:-0.222px;">13</div>
<div class="c" style="left:911.31px;top:510.80px;letter-spacing:-0.130px;">3,23</div>
<div class="c" style="left:837.40px;top:515.80px;letter-spacing:-0.125px;">G 4/8/80 SLT 100</div>
<div class="c" style="left:872.20px;top:515.80px;letter-spacing:-0.415px;">1997</div>
<div class="c" style="left:888.78px;top:515.80px;letter-spacing:-0.222px;">13</div>
<div class="c" style="left:911.31px;top:515.80px;letter-spacing:-0.130px;">3,23</div>
<div class="c" style="left:837.40px;top:539.80px;letter-spacing:-0.125px;">G 4/8/80 SLT 100</div>
<div class="c" style="left:872.20px;top:539.80px;letter-spacing:-0.415px;">1997</div>
<div class="c" style="left:888.78px;top:539.80px;letter-spacing:-0.222px;">13</div>
<div class="c" style="left:911.31px;top:539.80px;letter-spacing:-0.130px;">3,23</div>
<div class="c" style="left:837.40px;top:544.80px;letter-spacing:-0.125px;">G 4/8/80 SLT 100</div>
<div class="c" style="left:872.20px;top:544.80px;letter-spacing:-0.415px;">1997</div>
<div class="c" style="left:888.78px;top:544.80px;letter-spacing:-0.222px;">13</div>
<div class="c" style="left:911.31px;top:544.80px;letter-spacing:-0.130px;">3,23</div>
<div class="c" style="left:837.40px;top:549.90px;letter-spacing:-0.125px;">G 4/8/80 SLT 100</div>
<div class="c" style="left:872.20px;top:549.90px;letter-spacing:-0.415px;">1997</div>
<div class="c" style="left:888.78px;top:549.90px;letter-spacing:-0.222px;">13</div>
<div class="c" style="left:911.31px;top:549.90px;letter-spacing:-0.130px;">3,23</div>
<div class="c" style="left:837.40px;top:554.90px;letter-spacing:-0.125px;">G 4/8/80 SLT 100</div>
<div class="c" style="left:872.20px;top:554.90px;letter-spacing:-0.415px;">1997</div>
<div class="c" style="left:888.78px;top:554.90px;letter-spacing:-0.222px;">13</div>
<div class="c" style="left:911.31px;top:554.90px;letter-spacing:-0.130px;">3,23</div>
<div class="c" style="left:837.40px;top:559.70px;letter-spacing:-0.125px;">G 4/8/80 SLT 100</div>
<div class="c" style="left:872.20px;top:559.70px;letter-spacing:-0.415px;">1997</div>
<div class="c" style="left:888.78px;top:559.70px;letter-spacing:-0.222px;">13</div>
<div class="c" style="left:911.31px;top:559.70px;letter-spacing:-0.130px;">3,23</div>
<div class="c" style="left:837.40px;top:564.90px;letter-spacing:-0.125px;">G 4/8/80 SLT 100</div>
<div class="c" style="left:872.20px;top:564.90px;letter-spacing:-0.415px;">1997</div>
<div class="c" style="left:888.78px;top:564.90px;letter-spacing:-0.222px;">13</div>
<div class="c" style="left:911.31px;top:564.90px;letter-spacing:-0.130px;">3,23</div>
<div class="c" style="left:948.29px;top:270.20px;letter-spacing:-0.113px;">Ladegerät</div>
<div class="c" style="left:983.44px;top:270.20px;letter-spacing:-0.114px;">Preis</div>
<div class="c" style="left:997.14px;top:270.20px;letter-spacing:-0.108px;">Ladezeit</div>
<div class="c" style="left:1014.94px;top:270.20px;letter-spacing:-0.112px;">Kosten/Ladung</div>
<div class="c" style="left:931.30px;top:295.00px;letter-spacing:-0.097px;">G 4/8/80 SLT 100 mit BLH/</div>
<div class="c" style="left:985.20px;top:295.00px;letter-spacing:-0.248px;">1977</div>
<div class="c" style="left:1000.61px;top:295.00px;letter-spacing:-0.130px;">10,8</div>
<div class="c" style="left:1025.01px;top:295.00px;letter-spacing:-0.130px;">3,08</div>
<div class="c" style="left:931.30px;top:300.10px;letter-spacing:-0.097px;">G 4/8/80 SLT 100 mit BLH/</div>
<div class="c" style="left:985.20px;top:300.10px;letter-spacing:-0.248px;">1977</div>
<div class="c" style="left:1000.61px;top:300.10px;letter-spacing:-0.130px;">10,8</div>
<div class="c" style="left:1025.01px;top:300.10px;letter-spacing:-0.130px;">3,08</div>
<div class="c" style="left:931.30px;top:305.00px;letter-spacing:-0.097px;">G 4/8/80 SLT 100 mit BLH/</div>
<div class="c" style="left:985.20px;top:305.00px;letter-spacing:-0.248px;">1977</div>
<div class="c" style="left:1000.61px;top:305.00px;letter-spacing:-0.130px;">10,8</div>
<div class="c" style="left:1025.01px;top:305.00px;letter-spacing:-0.130px;">3,08</div>
<div class="c" style="left:931.30px;top:310.00px;letter-spacing:-0.097px;">G 4/8/80 SLT 100 mit BLH/</div>
<div class="c" style="left:985.20px;top:310.00px;letter-spacing:-0.248px;">1977</div>
<div class="c" style="left:1000.61px;top:310.00px;letter-spacing:-0.130px;">10,8</div>
<div class="c" style="left:1025.01px;top:310.00px;letter-spacing:-0.130px;">3,08</div>
<div class="c" style="left:931.30px;top:313.90px;letter-spacing:-0.097px;">G 4/8/80 SLT 100 mit BLH/</div>
<div class="c" style="left:985.20px;top:313.90px;letter-spacing:-0.248px;">1977</div>
<div class="c" style="left:1000.61px;top:313.90px;letter-spacing:-0.130px;">10,8</div>
<div class="c" style="left:1025.01px;top:313.90px;letter-spacing:-0.130px;">1,98</div>
<div class="c" style="left:931.30px;top:318.80px;letter-spacing:-0.097px;">G 4/8/80 SLT 100 mit BLH/</div>
<div class="c" style="left:985.20px;top:318.80px;letter-spacing:-0.248px;">1977</div>
<div class="c" style="left:1000.61px;top:318.80px;letter-spacing:-0.130px;">10,8</div>
<div class="c" style="left:1025.01px;top:318.80px;letter-spacing:-0.130px;">1,98</div>
<div class="c" style="left:931.30px;top:344.20px;letter-spacing:-0.097px;">G 4/8/70 SLT 100 mit BLH/</div>
<div class="c" style="left:985.20px;top:344.20px;letter-spacing:-0.248px;">1977</div>
<div class="c" style="left:1000.61px;top:344.20px;letter-spacing:-0.130px;">10,8</div>
<div class="c" style="left:1025.01px;top:344.20px;letter-spacing:-0.130px;">3,07</div>
<div class="c" style="left:931.30px;top:349.00px;letter-spacing:-0.097px;">G 4/8/70 SLT 100 mit BLH/</div>
<div class="c" style="left:985.20px;top:349.00px;letter-spacing:-0.248px;">1977</div>
<div class="c" style="left:1000.61px;top:349.00px;letter-spacing:-0.130px;">10,8</div>
<div class="c" style="left:1025.01px;top:349.00px;letter-spacing:-0.130px;">3,07</div>
<div class="c" style="left:931.30px;top:353.90px;letter-spacing:-0.097px;">G 4/8/70 SLT 100 mit BLH/</div>
<div class="c" style="left:985.20px;top:353.90px;letter-spacing:-0.248px;">1977</div>
<div class="c" style="left:1000.61px;top:353.90px;letter-spacing:-0.130px;">10,8</div>
<div class="c" style="left:1025.01px;top:353.90px;letter-spacing:-0.130px;">3,07</div>
<div class="c" style="left:931.30px;top:359.00px;letter-spacing:-0.097px;">G 4/8/70 SLT 100 mit BLH/</div>
<div class="c" style="left:985.20px;top:359.00px;letter-spacing:-0.248px;">1977</div>
<div class="c" style="left:1000.61px;top:359.00px;letter-spacing:-0.130px;">10,8</div>
<div class="c" style="left:1025.01px;top:359.00px;letter-spacing:-0.130px;">3,07</div>
<div class="c" style="left:931.30px;top:363.90px;letter-spacing:-0.097px;">G 4/8/70 SLT 100 mit BLH/</div>
<div class="c" style="left:985.20px;top:363.90px;letter-spacing:-0.248px;">1977</div>
<div class="c" style="left:1000.61px;top:363.90px;letter-spacing:-0.130px;">10,8</div>
<div class="c" style="left:1025.01px;top:363.90px;letter-spacing:-0.130px;">3,07</div>
<div class="c" style="left:931.30px;top:367.60px;letter-spacing:-0.097px;">G 4/8/70 SLT 100 mit BLH/</div>
<div class="c" style="left:985.20px;top:367.60px;letter-spacing:-0.248px;">1977</div>
<div class="c" style="left:1000.61px;top:367.60px;letter-spacing:-0.130px;">10,8</div>
<div class="c" style="left:1025.01px;top:367.60px;letter-spacing:-0.130px;">3,07</div>
<div class="c" style="left:931.30px;top:393.10px;letter-spacing:-0.097px;">G 4/8/80 SLT 100 mit BLH/</div>
<div class="c" style="left:985.20px;top:393.10px;letter-spacing:-0.248px;">2413</div>
<div class="c" style="left:1000.61px;top:393.10px;letter-spacing:-0.130px;">10,8</div>
<div class="c" style="left:1025.01px;top:393.10px;letter-spacing:-0.130px;">3,08</div>
<div class="c" style="left:931.30px;top:398.00px;letter-spacing:-0.097px;">G 4/8/80 SLT 100 mit BLH/</div>
<div class="c" style="left:985.20px;top:398.00px;letter-spacing:-0.248px;">2413</div>
<div class="c" style="left:1000.61px;top:398.00px;letter-spacing:-0.130px;">10,8</div>
<div class="c" style="left:1025.01px;top:398.00px;letter-spacing:-0.130px;">3,08</div>
<div class="c" style="left:931.30px;top:403.10px;letter-spacing:-0.097px;">G 4/8/80 SLT 100 mit BLH/</div>
<div class="c" style="left:985.20px;top:403.10px;letter-spacing:-0.248px;">2413</div>
<div class="c" style="left:1000.61px;top:403.10px;letter-spacing:-0.130px;">10,8</div>
<div class="c" style="left:1025.01px;top:403.10px;letter-spacing:-0.130px;">3,08</div>
<div class="c" style="left:931.30px;top:407.90px;letter-spacing:-0.097px;">G 4/8/80 SLT 100 mit BLH/</div>
<div class="c" style="left:985.20px;top:407.90px;letter-spacing:-0.248px;">2413</div>
<div class="c" style="left:1000.61px;top:407.90px;letter-spacing:-0.130px;">10,8</div>
<div class="c" style="left:1025.01px;top:407.90px;letter-spacing:-0.130px;">3,08</div>
<div class="c" style="left:931.30px;top:413.00px;letter-spacing:-0.097px;">G 4/8/80 SLT 100 mit BLH/</div>
<div class="c" style="left:985.20px;top:413.00px;letter-spacing:-0.248px;">2413</div>
<div class="c" style="left:1000.61px;top:413.00px;letter-spacing:-0.130px;">10,8</div>
<div class="c" style="left:1025.01px;top:413.00px;letter-spacing:-0.130px;">3,08</div>
<div class="c" style="left:931.30px;top:417.90px;letter-spacing:-0.097px;">G 4/8/80 SLT 100 mit BLH/</div>
<div class="c" style="left:985.20px;top:417.90px;letter-spacing:-0.248px;">2413</div>
<div class="c" style="left:1000.61px;top:417.90px;letter-spacing:-0.130px;">10,8</div>
<div class="c" style="left:1025.01px;top:417.90px;letter-spacing:-0.130px;">3,08</div>
<div class="c" style="left:931.30px;top:442.10px;letter-spacing:-0.097px;">G 4/8/70 SLT 100 mit BLH/</div>
<div class="c" style="left:985.20px;top:442.10px;letter-spacing:-0.248px;">1977</div>
<div class="c" style="left:1000.61px;top:442.10px;letter-spacing:-0.130px;">10,8</div>
<div class="c" style="left:1025.01px;top:442.10px;letter-spacing:-0.130px;">3,07</div>
<div class="c" style="left:931.30px;top:446.90px;letter-spacing:-0.097px;">G 4/8/70 SLT 100 mit BLH/</div>
<div class="c" style="left:985.20px;top:446.90px;letter-spacing:-0.248px;">1977</div>
<div class="c" style="left:1000.61px;top:446.90px;letter-spacing:-0.130px;">10,8</div>
<div class="c" style="left:1025.01px;top:446.90px;letter-spacing:-0.130px;">3,07</div>
<div class="c" style="left:931.30px;top:451.90px;letter-spacing:-0.097px;">G 4/8/70 SLT 100 mit BLH/</div>
<div class="c" style="left:985.20px;top:451.90px;letter-spacing:-0.248px;">1977</div>
<div class="c" style="left:1000.61px;top:451.90px;letter-spacing:-0.130px;">10,8</div>
<div class="c" style="left:1025.01px;top:451.90px;letter-spacing:-0.130px;">3,07</div>
<div class="c" style="left:931.30px;top:456.70px;letter-spacing:-0.097px;">G 4/8/70 SLT 100 mit BLH/</div>
<div class="c" style="left:985.20px;top:456.70px;letter-spacing:-0.248px;">1977</div>
<div class="c" style="left:1000.61px;top:456.70px;letter-spacing:-0.130px;">10,8</div>
<div class="c" style="left:1025.01px;top:456.70px;letter-spacing:-0.130px;">3,07</div>
<div class="c" style="left:931.30px;top:461.70px;letter-spacing:-0.097px;">G 4/8/70 SLT 100 mit BLH/</div>
<div class="c" style="left:985.20px;top:461.70px;letter-spacing:-0.248px;">1977</div>
<div class="c" style="left:1000.61px;top:461.70px;letter-spacing:-0.130px;">10,8</div>
<div class="c" style="left:1025.01px;top:461.70px;letter-spacing:-0.130px;">3,07</div>
<div class="c" style="left:931.30px;top:466.80px;letter-spacing:-0.097px;">G 4/8/70 SLT 100 mit BLH/</div>
<div class="c" style="left:985.20px;top:466.80px;letter-spacing:-0.248px;">1977</div>
<div class="c" style="left:1000.61px;top:466.80px;letter-spacing:-0.130px;">10,8</div>
<div class="c" style="left:1025.01px;top:466.80px;letter-spacing:-0.130px;">3,07</div>
<div class="c" style="left:931.30px;top:491.20px;letter-spacing:-0.097px;">G 4/8/80 SLT 100 mit BLH/</div>
<div class="c" style="left:985.20px;top:491.20px;letter-spacing:-0.248px;">2413</div>
<div class="c" style="left:1000.61px;top:491.20px;letter-spacing:-0.130px;">10,8</div>
<div class="c" style="left:1025.01px;top:491.20px;letter-spacing:-0.130px;">3,08</div>
<div class="c" style="left:931.30px;top:496.00px;letter-spacing:-0.097px;">G 4/8/80 SLT 100 mit BLH/</div>
<div class="c" style="left:985.20px;top:496.00px;letter-spacing:-0.248px;">2413</div>
<div class="c" style="left:1000.61px;top:496.00px;letter-spacing:-0.130px;">10,8</div>
<div class="c" style="left:1025.01px;top:496.00px;letter-spacing:-0.130px;">3,08</div>
<div class="c" style="left:931.30px;top:501.00px;letter-spacing:-0.097px;">G 4/8/80 SLT 100 mit BLH/</div>
<div class="c" style="left:985.20px;top:501.00px;letter-spacing:-0.248px;">2413</div>
<div class="c" style="left:1000.61px;top:501.00px;letter-spacing:-0.130px;">10,8</div>
<div class="c" style="left:1025.01px;top:501.00px;letter-spacing:-0.130px;">3,08</div>
<div class="c" style="left:931.30px;top:505.80px;letter-spacing:-0.097px;">G 4/8/80 SLT 100 mit BLH/</div>
<div class="c" style="left:985.20px;top:505.80px;letter-spacing:-0.248px;">2413</div>
<div class="c" style="left:1000.61px;top:505.80px;letter-spacing:-0.130px;">10,8</div>
<div class="c" style="left:1025.01px;top:505.80px;letter-spacing:-0.130px;">3,08</div>
<div class="c" style="left:931.30px;top:510.80px;letter-spacing:-0.097px;">G 4/8/80 SLT 100 mit BLH/</div>
<div class="c" style="left:985.20px;top:510.80px;letter-spacing:-0.248px;">2413</div>
<div class="c" style="left:1000.61px;top:510.80px;letter-spacing:-0.130px;">10,8</div>
<div class="c" style="left:1025.01px;top:510.80px;letter-spacing:-0.130px;">3,08</div>
<div class="c" style="left:931.30px;top:515.80px;letter-spacing:-0.097px;">G 4/8/80 SLT 100 mit BLH/</div>
<div class="c" style="left:985.20px;top:515.80px;letter-spacing:-0.248px;">2413</div>
<div class="c" style="left:1000.61px;top:515.80px;letter-spacing:-0.130px;">10,8</div>
<div class="c" style="left:1025.01px;top:515.80px;letter-spacing:-0.130px;">3,08</div>
<div class="c" style="left:931.30px;top:539.80px;letter-spacing:-0.097px;">G 4/8/80 SLT 100 mit BLH/</div>
<div class="c" style="left:985.20px;top:539.80px;letter-spacing:-0.248px;">2413</div>
<div class="c" style="left:1000.61px;top:539.80px;letter-spacing:-0.130px;">10,8</div>
<div class="c" style="left:1025.01px;top:539.80px;letter-spacing:-0.130px;">3,08</div>
<div class="c" style="left:931.30px;top:544.80px;letter-spacing:-0.097px;">G 4/8/80 SLT 100 mit BLH/</div>
<div class="c" style="left:985.20px;top:544.80px;letter-spacing:-0.248px;">2413</div>
<div class="c" style="left:1000.61px;top:544.80px;letter-spacing:-0.130px;">10,8</div>
<div class="c" style="left:1025.01px;top:544.80px;letter-spacing:-0.130px;">3,08</div>
<div class="c" style="left:931.30px;top:549.90px;letter-spacing:-0.097px;">G 4/8/80 SLT 100 mit BLH/</div>
<div class="c" style="left:985.20px;top:549.90px;letter-spacing:-0.248px;">2413</div>
<div class="c" style="left:1000.61px;top:549.90px;letter-spacing:-0.130px;">10,8</div>
<div class="c" style="left:1025.01px;top:549.90px;letter-spacing:-0.130px;">3,08</div>
<div class="c" style="left:931.30px;top:554.90px;letter-spacing:-0.097px;">G 4/8/80 SLT 100 mit BLH/</div>
<div class="c" style="left:985.20px;top:554.90px;letter-spacing:-0.248px;">2413</div>
<div class="c" style="left:1000.61px;top:554.90px;letter-spacing:-0.130px;">10,8</div>
<div class="c" style="left:1025.01px;top:554.90px;letter-spacing:-0.130px;">3,08</div>
<div class="c" style="left:931.30px;top:559.70px;letter-spacing:-0.097px;">G 4/8/80 SLT 100 mit BLH/</div>
<div class="c" style="left:985.20px;top:559.70px;letter-spacing:-0.248px;">2413</div>
<div class="c" style="left:1000.61px;top:559.70px;letter-spacing:-0.130px;">10,8</div>
<div class="c" style="left:1025.01px;top:559.70px;letter-spacing:-0.130px;">3,08</div>
<div class="c" style="left:931.30px;top:564.90px;letter-spacing:-0.097px;">G 4/8/80 SLT 100 mit BLH/</div>
<div class="c" style="left:985.20px;top:564.90px;letter-spacing:-0.248px;">2413</div>
<div class="c" style="left:1000.61px;top:564.90px;letter-spacing:-0.130px;">10,8</div>
<div class="c" style="left:1025.01px;top:564.90px;letter-spacing:-0.130px;">3,08</div>
<div class="c" style="left:1053.29px;top:270.20px;letter-spacing:-0.113px;">Ladegerät</div>
<div class="c" style="left:1082.44px;top:270.20px;letter-spacing:-0.114px;">Preis</div>
<div class="c" style="left:1094.24px;top:270.20px;letter-spacing:-0.108px;">Ladezeit</div>
<div class="c" style="left:1115.04px;top:270.20px;letter-spacing:-0.112px;">Kosten/Ladung</div>
<div class="c" style="left:1044.50px;top:295.00px;letter-spacing:-0.231px;">G 4/8/100 SLT 100</div>
<div class="c" style="left:1083.30px;top:295.00px;letter-spacing:-0.248px;">1997</div>
<div class="c" style="left:1101.83px;top:295.00px;">8</div>
<div class="c" style="left:1125.11px;top:295.00px;letter-spacing:-0.130px;">3,18</div>
<div class="c" style="left:1044.50px;top:300.10px;letter-spacing:-0.231px;">G 4/8/100 SLT 100</div>
<div class="c" style="left:1083.30px;top:300.10px;letter-spacing:-0.248px;">1997</div>
<div class="c" style="left:1101.83px;top:300.10px;">8</div>
<div class="c" style="left:1125.11px;top:300.10px;letter-spacing:-0.130px;">3,18</div>
<div class="c" style="left:1044.50px;top:305.00px;letter-spacing:-0.231px;">G 4/8/100 SLT 100</div>
<div class="c" style="left:1083.30px;top:305.00px;letter-spacing:-0.248px;">1997</div>
<div class="c" style="left:1101.83px;top:305.00px;">8</div>
<div class="c" style="left:1125.11px;top:305.00px;letter-spacing:-0.130px;">3,18</div>
<div class="c" style="left:1044.50px;top:310.00px;letter-spacing:-0.231px;">G 4/8/100 SLT 100</div>
<div class="c" style="left:1083.30px;top:310.00px;letter-spacing:-0.248px;">1997</div>
<div class="c" style="left:1101.83px;top:310.00px;">8</div>
<div class="c" style="left:1125.11px;top:310.00px;letter-spacing:-0.130px;">3,18</div>
<div class="c" style="left:1044.50px;top:313.90px;letter-spacing:-0.231px;">G 4/8/100 SLT 100</div>
<div class="c" style="left:1083.30px;top:313.90px;letter-spacing:-0.248px;">1997</div>
<div class="c" style="left:1101.83px;top:313.90px;">8</div>
<div class="c" style="left:1125.11px;top:313.90px;letter-spacing:-0.130px;">1,98</div>
<div class="c" style="left:1044.50px;top:318.80px;letter-spacing:-0.231px;">G 4/8/100 SLT 100</div>
<div class="c" style="left:1083.30px;top:318.80px;letter-spacing:-0.248px;">1997</div>
<div class="c" style="left:1101.83px;top:318.80px;">8</div>
<div class="c" style="left:1125.11px;top:318.80px;letter-spacing:-0.130px;">1,98</div>
<div class="c" style="left:1044.50px;top:344.20px;letter-spacing:-0.231px;">G 4/8/108 SLT 100</div>
<div class="c" style="left:1083.30px;top:344.20px;letter-spacing:-0.248px;">2207</div>
<div class="c" style="left:1101.83px;top:344.20px;">8</div>
<div class="c" style="left:1125.11px;top:344.20px;letter-spacing:-0.130px;">3,68</div>
<div class="c" style="left:1044.50px;top:349.00px;letter-spacing:-0.231px;">G 4/8/108 SLT 100</div>
<div class="c" style="left:1083.30px;top:349.00px;letter-spacing:-0.248px;">2207</div>
<div class="c" style="left:1101.83px;top:349.00px;">8</div>
<div class="c" style="left:1125.11px;top:349.00px;letter-spacing:-0.130px;">3,68</div>
<div class="c" style="left:1044.50px;top:353.90px;letter-spacing:-0.231px;">G 4/8/108 SLT 100</div>
<div class="c" style="left:1083.30px;top:353.90px;letter-spacing:-0.248px;">2207</div>
<div class="c" style="left:1101.83px;top:353.90px;">8</div>
<div class="c" style="left:1125.11px;top:353.90px;letter-spacing:-0.130px;">3,68</div>
<div class="c" style="left:1044.50px;top:359.00px;letter-spacing:-0.231px;">G 4/8/108 SLT 100</div>
<div class="c" style="left:1083.30px;top:359.00px;letter-spacing:-0.248px;">2207</div>
<div class="c" style="left:1101.83px;top:359.00px;">8</div>
<div class="c" style="left:1125.11px;top:359.00px;letter-spacing:-0.130px;">3,68</div>
<div class="c" style="left:1044.50px;top:363.90px;letter-spacing:-0.231px;">G 4/8/108 SLT 100</div>
<div class="c" style="left:1083.30px;top:363.90px;letter-spacing:-0.248px;">2207</div>
<div class="c" style="left:1101.83px;top:363.90px;">8</div>
<div class="c" style="left:1125.11px;top:363.90px;letter-spacing:-0.130px;">3,68</div>
<div class="c" style="left:1044.50px;top:367.60px;letter-spacing:-0.231px;">G 4/8/108 SLT 100</div>
<div class="c" style="left:1083.30px;top:367.60px;letter-spacing:-0.248px;">2207</div>
<div class="c" style="left:1101.83px;top:367.60px;">8</div>
<div class="c" style="left:1125.11px;top:367.60px;letter-spacing:-0.130px;">3,68</div>
<div class="c" style="left:1044.50px;top:393.10px;letter-spacing:-0.231px;">G 4/8/140 SLT 100</div>
<div class="c" style="left:1083.30px;top:393.10px;letter-spacing:-0.248px;">2643</div>
<div class="c" style="left:1101.83px;top:393.10px;">8</div>
<div class="c" style="left:1125.11px;top:393.10px;letter-spacing:-0.130px;">3,23</div>
<div class="c" style="left:1044.50px;top:398.00px;letter-spacing:-0.231px;">G 4/8/140 SLT 100</div>
<div class="c" style="left:1083.30px;top:398.00px;letter-spacing:-0.248px;">2643</div>
<div class="c" style="left:1101.83px;top:398.00px;">8</div>
<div class="c" style="left:1125.11px;top:398.00px;letter-spacing:-0.130px;">3,23</div>
<div class="c" style="left:1044.50px;top:403.10px;letter-spacing:-0.231px;">G 4/8/140 SLT 100</div>
<div class="c" style="left:1083.30px;top:403.10px;letter-spacing:-0.248px;">2643</div>
<div class="c" style="left:1101.83px;top:403.10px;">8</div>
<div class="c" style="left:1125.11px;top:403.10px;letter-spacing:-0.130px;">3,23</div>
<div class="c" style="left:1044.50px;top:407.90px;letter-spacing:-0.231px;">G 4/8/140 SLT 100</div>
<div class="c" style="left:1083.30px;top:407.90px;letter-spacing:-0.248px;">2643</div>
<div class="c" style="left:1101.83px;top:407.90px;">8</div>
<div class="c" style="left:1125.11px;top:407.90px;letter-spacing:-0.130px;">3,23</div>
<div class="c" style="left:1044.50px;top:413.00px;letter-spacing:-0.231px;">G 4/8/140 SLT 100</div>
<div class="c" style="left:1083.30px;top:413.00px;letter-spacing:-0.248px;">2643</div>
<div class="c" style="left:1101.83px;top:413.00px;">8</div>
<div class="c" style="left:1125.11px;top:413.00px;letter-spacing:-0.130px;">3,23</div>
<div class="c" style="left:1044.50px;top:417.90px;letter-spacing:-0.231px;">G 4/8/140 SLT 100</div>
<div class="c" style="left:1083.30px;top:417.90px;letter-spacing:-0.248px;">2643</div>
<div class="c" style="left:1101.83px;top:417.90px;">8</div>
<div class="c" style="left:1125.11px;top:417.90px;letter-spacing:-0.130px;">3,23</div>
<div class="c" style="left:1044.50px;top:442.10px;letter-spacing:-0.231px;">G 4/8/108 SLT 100</div>
<div class="c" style="left:1083.30px;top:442.10px;letter-spacing:-0.248px;">2207</div>
<div class="c" style="left:1101.83px;top:442.10px;">8</div>
<div class="c" style="left:1125.11px;top:442.10px;letter-spacing:-0.130px;">3,68</div>
<div class="c" style="left:1044.50px;top:446.90px;letter-spacing:-0.231px;">G 4/8/108 SLT 100</div>
<div class="c" style="left:1083.30px;top:446.90px;letter-spacing:-0.248px;">2207</div>
<div class="c" style="left:1101.83px;top:446.90px;">8</div>
<div class="c" style="left:1125.11px;top:446.90px;letter-spacing:-0.130px;">3,68</div>
<div class="c" style="left:1044.50px;top:451.90px;letter-spacing:-0.231px;">G 4/8/108 SLT 100</div>
<div class="c" style="left:1083.30px;top:451.90px;letter-spacing:-0.248px;">2207</div>
<div class="c" style="left:1101.83px;top:451.90px;">8</div>
<div class="c" style="left:1125.11px;top:451.90px;letter-spacing:-0.130px;">3,68</div>
<div class="c" style="left:1044.50px;top:456.70px;letter-spacing:-0.231px;">G 4/8/108 SLT 100</div>
<div class="c" style="left:1083.30px;top:456.70px;letter-spacing:-0.248px;">2207</div>
<div class="c" style="left:1101.83px;top:456.70px;">8</div>
<div class="c" style="left:1125.11px;top:456.70px;letter-spacing:-0.130px;">3,68</div>
<div class="c" style="left:1044.50px;top:461.70px;letter-spacing:-0.231px;">G 4/8/108 SLT 100</div>
<div class="c" style="left:1083.30px;top:461.70px;letter-spacing:-0.248px;">2207</div>
<div class="c" style="left:1101.83px;top:461.70px;">8</div>
<div class="c" style="left:1125.11px;top:461.70px;letter-spacing:-0.130px;">3,68</div>
<div class="c" style="left:1044.50px;top:466.80px;letter-spacing:-0.231px;">G 4/8/108 SLT 100</div>
<div class="c" style="left:1083.30px;top:466.80px;letter-spacing:-0.248px;">2207</div>
<div class="c" style="left:1101.83px;top:466.80px;">8</div>
<div class="c" style="left:1125.11px;top:466.80px;letter-spacing:-0.130px;">3,68</div>
<div class="c" style="left:1044.50px;top:491.20px;letter-spacing:-0.231px;">G 4/8/140 SLT 100</div>
<div class="c" style="left:1083.30px;top:491.20px;letter-spacing:-0.248px;">2643</div>
<div class="c" style="left:1101.83px;top:491.20px;">8</div>
<div class="c" style="left:1125.11px;top:491.20px;letter-spacing:-0.130px;">3,23</div>
<div class="c" style="left:1044.50px;top:496.00px;letter-spacing:-0.231px;">G 4/8/140 SLT 100</div>
<div class="c" style="left:1083.30px;top:496.00px;letter-spacing:-0.248px;">2643</div>
<div class="c" style="left:1101.83px;top:496.00px;">8</div>
<div class="c" style="left:1125.11px;top:496.00px;letter-spacing:-0.130px;">3,23</div>
<div class="c" style="left:1044.50px;top:501.00px;letter-spacing:-0.231px;">G 4/8/140 SLT 100</div>
<div class="c" style="left:1083.30px;top:501.00px;letter-spacing:-0.248px;">2643</div>
<div class="c" style="left:1101.83px;top:501.00px;">8</div>
<div class="c" style="left:1125.11px;top:501.00px;letter-spacing:-0.130px;">3,23</div>
<div class="c" style="left:1044.50px;top:505.80px;letter-spacing:-0.231px;">G 4/8/140 SLT 100</div>
<div class="c" style="left:1083.30px;top:505.80px;letter-spacing:-0.248px;">2643</div>
<div class="c" style="left:1101.83px;top:505.80px;">8</div>
<div class="c" style="left:1125.11px;top:505.80px;letter-spacing:-0.130px;">3,23</div>
<div class="c" style="left:1044.50px;top:510.80px;letter-spacing:-0.231px;">G 4/8/140 SLT 100</div>
<div class="c" style="left:1083.30px;top:510.80px;letter-spacing:-0.248px;">2643</div>
<div class="c" style="left:1101.83px;top:510.80px;">8</div>
<div class="c" style="left:1125.11px;top:510.80px;letter-spacing:-0.130px;">3,23</div>
<div class="c" style="left:1044.50px;top:515.80px;letter-spacing:-0.231px;">G 4/8/140 SLT 100</div>
<div class="c" style="left:1083.30px;top:515.80px;letter-spacing:-0.248px;">2643</div>
<div class="c" style="left:1101.83px;top:515.80px;">8</div>
<div class="c" style="left:1125.11px;top:515.80px;letter-spacing:-0.130px;">3,23</div>
<div class="c" style="left:1044.50px;top:539.80px;letter-spacing:-0.231px;">G 4/8/140 SLT 100</div>
<div class="c" style="left:1083.30px;top:539.80px;letter-spacing:-0.248px;">2643</div>
<div class="c" style="left:1101.83px;top:539.80px;">8</div>
<div class="c" style="left:1125.11px;top:539.80px;letter-spacing:-0.130px;">3,23</div>
<div class="c" style="left:1044.50px;top:544.80px;letter-spacing:-0.231px;">G 4/8/140 SLT 100</div>
<div class="c" style="left:1083.30px;top:544.80px;letter-spacing:-0.248px;">2643</div>
<div class="c" style="left:1101.83px;top:544.80px;">8</div>
<div class="c" style="left:1125.11px;top:544.80px;letter-spacing:-0.130px;">3,23</div>
<div class="c" style="left:1044.50px;top:549.90px;letter-spacing:-0.231px;">G 4/8/140 SLT 100</div>
<div class="c" style="left:1083.30px;top:549.90px;letter-spacing:-0.248px;">2643</div>
<div class="c" style="left:1101.83px;top:549.90px;">8</div>
<div class="c" style="left:1125.11px;top:549.90px;letter-spacing:-0.130px;">3,23</div>
<div class="c" style="left:1044.50px;top:554.90px;letter-spacing:-0.231px;">G 4/8/140 SLT 100</div>
<div class="c" style="left:1083.30px;top:554.90px;letter-spacing:-0.248px;">2643</div>
<div class="c" style="left:1101.83px;top:554.90px;">8</div>
<div class="c" style="left:1125.11px;top:554.90px;letter-spacing:-0.130px;">3,23</div>
<div class="c" style="left:1044.50px;top:559.70px;letter-spacing:-0.231px;">G 4/8/140 SLT 100</div>
<div class="c" style="left:1083.30px;top:559.70px;letter-spacing:-0.248px;">2643</div>
<div class="c" style="left:1101.83px;top:559.70px;">8</div>
<div class="c" style="left:1125.11px;top:559.70px;letter-spacing:-0.130px;">3,23</div>
<div class="c" style="left:1044.50px;top:564.90px;letter-spacing:-0.231px;">G 4/8/140 SLT 100</div>
<div class="c" style="left:1083.30px;top:564.90px;letter-spacing:-0.248px;">2643</div>
<div class="c" style="left:1101.83px;top:564.90px;">8</div>
<div class="c" style="left:1125.11px;top:564.90px;letter-spacing:-0.130px;">3,23</div>
<div class="c" style="left:1162.99px;top:270.20px;letter-spacing:-0.113px;">Ladegerät</div>
<div class="c" style="left:1199.14px;top:270.20px;letter-spacing:-0.114px;">Preis</div>
<div class="c" style="left:1211.94px;top:270.20px;letter-spacing:-0.108px;">Ladezeit</div>
<div class="c" style="left:1230.74px;top:270.20px;letter-spacing:-0.112px;">Kosten/Ladung</div>
<div class="c" style="left:1145.40px;top:295.00px;letter-spacing:-0.102px;">G 6/8/90 SLT 100 mit BLH/</div>
<div class="c" style="left:1200.50px;top:295.00px;letter-spacing:-0.081px;">2413</div>
<div class="c" style="left:1217.02px;top:295.00px;letter-spacing:-0.139px;">8,8</div>
<div class="c" style="left:1240.31px;top:295.00px;letter-spacing:-0.130px;">3,08</div>
<div class="c" style="left:1145.40px;top:300.10px;letter-spacing:-0.102px;">G 6/8/90 SLT 100 mit BLH/</div>
<div class="c" style="left:1200.50px;top:300.10px;letter-spacing:-0.081px;">2413</div>
<div class="c" style="left:1217.02px;top:300.10px;letter-spacing:-0.139px;">8,8</div>
<div class="c" style="left:1240.31px;top:300.10px;letter-spacing:-0.130px;">3,08</div>
<div class="c" style="left:1145.40px;top:305.00px;letter-spacing:-0.102px;">G 6/8/90 SLT 100 mit BLH/</div>
<div class="c" style="left:1200.50px;top:305.00px;letter-spacing:-0.081px;">2413</div>
<div class="c" style="left:1217.02px;top:305.00px;letter-spacing:-0.139px;">8,8</div>
<div class="c" style="left:1240.31px;top:305.00px;letter-spacing:-0.130px;">3,08</div>
<div class="c" style="left:1145.40px;top:310.00px;letter-spacing:-0.102px;">G 6/8/90 SLT 100 mit BLH/</div>
<div class="c" style="left:1200.50px;top:310.00px;letter-spacing:-0.081px;">2413</div>
<div class="c" style="left:1217.02px;top:310.00px;letter-spacing:-0.139px;">8,8</div>
<div class="c" style="left:1240.31px;top:310.00px;letter-spacing:-0.130px;">3,08</div>
<div class="c" style="left:1145.40px;top:313.90px;letter-spacing:-0.102px;">G 6/8/90 SLT 100 mit BLH/</div>
<div class="c" style="left:1200.50px;top:313.90px;letter-spacing:-0.081px;">2413</div>
<div class="c" style="left:1217.02px;top:313.90px;letter-spacing:-0.139px;">8,8</div>
<div class="c" style="left:1240.31px;top:313.90px;letter-spacing:-0.130px;">1,98</div>
<div class="c" style="left:1145.40px;top:318.80px;letter-spacing:-0.102px;">G 6/8/90 SLT 100 mit BLH/</div>
<div class="c" style="left:1200.50px;top:318.80px;letter-spacing:-0.081px;">2413</div>
<div class="c" style="left:1217.02px;top:318.80px;letter-spacing:-0.139px;">8,8</div>
<div class="c" style="left:1240.31px;top:318.80px;letter-spacing:-0.130px;">1,98</div>
<div class="c" style="left:1145.40px;top:344.20px;letter-spacing:-0.191px;">G 6/8/108 SLT 100 mit BLH/</div>
<div class="c" style="left:1200.50px;top:344.20px;letter-spacing:-0.081px;">2603</div>
<div class="c" style="left:1217.02px;top:344.20px;letter-spacing:-0.139px;">8,8</div>
<div class="c" style="left:1240.31px;top:344.20px;letter-spacing:-0.130px;">3,07</div>
<div class="c" style="left:1145.40px;top:349.00px;letter-spacing:-0.191px;">G 6/8/108 SLT 100 mit BLH/</div>
<div class="c" style="left:1200.50px;top:349.00px;letter-spacing:-0.081px;">2603</div>
<div class="c" style="left:1217.02px;top:349.00px;letter-spacing:-0.139px;">8,8</div>
<div class="c" style="left:1240.31px;top:349.00px;letter-spacing:-0.130px;">3,07</div>
<div class="c" style="left:1145.40px;top:353.90px;letter-spacing:-0.191px;">G 6/8/108 SLT 100 mit BLH/</div>
<div class="c" style="left:1200.50px;top:353.90px;letter-spacing:-0.081px;">2603</div>
<div class="c" style="left:1217.02px;top:353.90px;letter-spacing:-0.139px;">8,8</div>
<div class="c" style="left:1240.31px;top:353.90px;letter-spacing:-0.130px;">3,07</div>
<div class="c" style="left:1145.40px;top:359.00px;letter-spacing:-0.191px;">G 6/8/108 SLT 100 mit BLH/</div>
<div class="c" style="left:1200.50px;top:359.00px;letter-spacing:-0.081px;">2603</div>
<div class="c" style="left:1217.02px;top:359.00px;letter-spacing:-0.139px;">8,8</div>
<div class="c" style="left:1240.31px;top:359.00px;letter-spacing:-0.130px;">3,07</div>
<div class="c" style="left:1145.40px;top:363.90px;letter-spacing:-0.191px;">G 6/8/108 SLT 100 mit BLH/</div>
<div class="c" style="left:1200.50px;top:363.90px;letter-spacing:-0.081px;">2603</div>
<div class="c" style="left:1217.02px;top:363.90px;letter-spacing:-0.139px;">8,8</div>
<div class="c" style="left:1240.31px;top:363.90px;letter-spacing:-0.130px;">3,07</div>
<div class="c" style="left:1145.40px;top:367.60px;letter-spacing:-0.191px;">G 6/8/108 SLT 100 mit BLH/</div>
<div class="c" style="left:1200.50px;top:367.60px;letter-spacing:-0.081px;">2603</div>
<div class="c" style="left:1217.02px;top:367.60px;letter-spacing:-0.139px;">8,8</div>
<div class="c" style="left:1240.31px;top:367.60px;letter-spacing:-0.130px;">3,07</div>
<div class="c" style="left:1145.40px;top:393.10px;letter-spacing:-0.191px;">G 6/8/140 SLT 100 mit BLH/</div>
<div class="c" style="left:1200.50px;top:393.10px;letter-spacing:-0.081px;">3099</div>
<div class="c" style="left:1217.02px;top:393.10px;letter-spacing:-0.139px;">8,8</div>
<div class="c" style="left:1240.31px;top:393.10px;letter-spacing:-0.130px;">3,08</div>
<div class="c" style="left:1145.40px;top:398.00px;letter-spacing:-0.191px;">G 6/8/140 SLT 100 mit BLH/</div>
<div class="c" style="left:1200.50px;top:398.00px;letter-spacing:-0.081px;">3099</div>
<div class="c" style="left:1217.02px;top:398.00px;letter-spacing:-0.139px;">8,8</div>
<div class="c" style="left:1240.31px;top:398.00px;letter-spacing:-0.130px;">3,08</div>
<div class="c" style="left:1145.40px;top:403.10px;letter-spacing:-0.191px;">G 6/8/140 SLT 100 mit BLH/</div>
<div class="c" style="left:1200.50px;top:403.10px;letter-spacing:-0.081px;">3099</div>
<div class="c" style="left:1217.02px;top:403.10px;letter-spacing:-0.139px;">8,8</div>
<div class="c" style="left:1240.31px;top:403.10px;letter-spacing:-0.130px;">3,08</div>
<div class="c" style="left:1145.40px;top:407.90px;letter-spacing:-0.191px;">G 6/8/140 SLT 100 mit BLH/</div>
<div class="c" style="left:1200.50px;top:407.90px;letter-spacing:-0.081px;">3099</div>
<div class="c" style="left:1217.02px;top:407.90px;letter-spacing:-0.139px;">8,8</div>
<div class="c" style="left:1240.31px;top:407.90px;letter-spacing:-0.130px;">3,08</div>
<div class="c" style="left:1145.40px;top:413.00px;letter-spacing:-0.191px;">G 6/8/140 SLT 100 mit BLH/</div>
<div class="c" style="left:1200.50px;top:413.00px;letter-spacing:-0.081px;">3099</div>
<div class="c" style="left:1217.02px;top:413.00px;letter-spacing:-0.139px;">8,8</div>
<div class="c" style="left:1240.31px;top:413.00px;letter-spacing:-0.130px;">3,08</div>
<div class="c" style="left:1145.40px;top:417.90px;letter-spacing:-0.191px;">G 6/8/140 SLT 100 mit BLH/</div>
<div class="c" style="left:1200.50px;top:417.90px;letter-spacing:-0.081px;">3099</div>
<div class="c" style="left:1217.02px;top:417.90px;letter-spacing:-0.139px;">8,8</div>
<div class="c" style="left:1240.31px;top:417.90px;letter-spacing:-0.130px;">3,08</div>
<div class="c" style="left:1145.40px;top:442.10px;letter-spacing:-0.191px;">G 6/8/108 SLT 100 mit BLH/</div>
<div class="c" style="left:1200.50px;top:442.10px;letter-spacing:-0.081px;">2603</div>
<div class="c" style="left:1217.02px;top:442.10px;letter-spacing:-0.139px;">8,8</div>
<div class="c" style="left:1240.31px;top:442.10px;letter-spacing:-0.130px;">3,07</div>
<div class="c" style="left:1145.40px;top:446.90px;letter-spacing:-0.191px;">G 6/8/108 SLT 100 mit BLH/</div>
<div class="c" style="left:1200.50px;top:446.90px;letter-spacing:-0.081px;">2603</div>
<div class="c" style="left:1217.02px;top:446.90px;letter-spacing:-0.139px;">8,8</div>
<div class="c" style="left:1240.31px;top:446.90px;letter-spacing:-0.130px;">3,07</div>
<div class="c" style="left:1145.40px;top:451.90px;letter-spacing:-0.191px;">G 6/8/108 SLT 100 mit BLH/</div>
<div class="c" style="left:1200.50px;top:451.90px;letter-spacing:-0.081px;">2603</div>
<div class="c" style="left:1217.02px;top:451.90px;letter-spacing:-0.139px;">8,8</div>
<div class="c" style="left:1240.31px;top:451.90px;letter-spacing:-0.130px;">3,07</div>
<div class="c" style="left:1145.40px;top:456.70px;letter-spacing:-0.191px;">G 6/8/108 SLT 100 mit BLH/</div>
<div class="c" style="left:1200.50px;top:456.70px;letter-spacing:-0.081px;">2603</div>
<div class="c" style="left:1217.02px;top:456.70px;letter-spacing:-0.139px;">8,8</div>
<div class="c" style="left:1240.31px;top:456.70px;letter-spacing:-0.130px;">3,07</div>
<div class="c" style="left:1145.40px;top:461.70px;letter-spacing:-0.191px;">G 6/8/108 SLT 100 mit BLH/</div>
<div class="c" style="left:1200.50px;top:461.70px;letter-spacing:-0.081px;">2603</div>
<div class="c" style="left:1217.02px;top:461.70px;letter-spacing:-0.139px;">8,8</div>
<div class="c" style="left:1240.31px;top:461.70px;letter-spacing:-0.130px;">3,07</div>
<div class="c" style="left:1145.40px;top:466.80px;letter-spacing:-0.191px;">G 6/8/108 SLT 100 mit BLH/</div>
<div class="c" style="left:1200.50px;top:466.80px;letter-spacing:-0.081px;">2603</div>
<div class="c" style="left:1217.02px;top:466.80px;letter-spacing:-0.139px;">8,8</div>
<div class="c" style="left:1240.31px;top:466.80px;letter-spacing:-0.130px;">3,07</div>
<div class="c" style="left:1145.40px;top:491.20px;letter-spacing:-0.191px;">G 6/8/140 SLT 100 mit BLH/</div>
<div class="c" style="left:1200.50px;top:491.20px;letter-spacing:-0.081px;">3099</div>
<div class="c" style="left:1217.02px;top:491.20px;letter-spacing:-0.139px;">8,8</div>
<div class="c" style="left:1240.31px;top:491.20px;letter-spacing:-0.130px;">3,08</div>
<div class="c" style="left:1145.40px;top:496.00px;letter-spacing:-0.191px;">G 6/8/140 SLT 100 mit BLH/</div>
<div class="c" style="left:1200.50px;top:496.00px;letter-spacing:-0.081px;">3099</div>
<div class="c" style="left:1217.02px;top:496.00px;letter-spacing:-0.139px;">8,8</div>
<div class="c" style="left:1240.31px;top:496.00px;letter-spacing:-0.130px;">3,08</div>
<div class="c" style="left:1145.40px;top:501.00px;letter-spacing:-0.191px;">G 6/8/140 SLT 100 mit BLH/</div>
<div class="c" style="left:1200.50px;top:501.00px;letter-spacing:-0.081px;">3099</div>
<div class="c" style="left:1217.02px;top:501.00px;letter-spacing:-0.139px;">8,8</div>
<div class="c" style="left:1240.31px;top:501.00px;letter-spacing:-0.130px;">3,08</div>
<div class="c" style="left:1145.40px;top:505.80px;letter-spacing:-0.191px;">G 6/8/140 SLT 100 mit BLH/</div>
<div class="c" style="left:1200.50px;top:505.80px;letter-spacing:-0.081px;">3099</div>
<div class="c" style="left:1217.02px;top:505.80px;letter-spacing:-0.139px;">8,8</div>
<div class="c" style="left:1240.31px;top:505.80px;letter-spacing:-0.130px;">3,08</div>
<div class="c" style="left:1145.40px;top:510.80px;letter-spacing:-0.191px;">G 6/8/140 SLT 100 mit BLH/</div>
<div class="c" style="left:1200.50px;top:510.80px;letter-spacing:-0.081px;">3099</div>
<div class="c" style="left:1217.02px;top:510.80px;letter-spacing:-0.139px;">8,8</div>
<div class="c" style="left:1240.31px;top:510.80px;letter-spacing:-0.130px;">3,08</div>
<div class="c" style="left:1145.40px;top:515.80px;letter-spacing:-0.191px;">G 6/8/140 SLT 100 mit BLH/</div>
<div class="c" style="left:1200.50px;top:515.80px;letter-spacing:-0.081px;">3099</div>
<div class="c" style="left:1217.02px;top:515.80px;letter-spacing:-0.139px;">8,8</div>
<div class="c" style="left:1240.31px;top:515.80px;letter-spacing:-0.130px;">3,08</div>
<div class="c" style="left:1145.40px;top:539.80px;letter-spacing:-0.191px;">G 6/8/140 SLT 100 mit BLH/</div>
<div class="c" style="left:1200.50px;top:539.80px;letter-spacing:-0.081px;">3099</div>
<div class="c" style="left:1217.02px;top:539.80px;letter-spacing:-0.139px;">8,8</div>
<div class="c" style="left:1240.31px;top:539.80px;letter-spacing:-0.130px;">3,08</div>
<div class="c" style="left:1145.40px;top:544.80px;letter-spacing:-0.191px;">G 6/8/140 SLT 100 mit BLH/</div>
<div class="c" style="left:1200.50px;top:544.80px;letter-spacing:-0.081px;">3099</div>
<div class="c" style="left:1217.02px;top:544.80px;letter-spacing:-0.139px;">8,8</div>
<div class="c" style="left:1240.31px;top:544.80px;letter-spacing:-0.130px;">3,08</div>
<div class="c" style="left:1145.40px;top:549.90px;letter-spacing:-0.191px;">G 6/8/140 SLT 100 mit BLH/</div>
<div class="c" style="left:1200.50px;top:549.90px;letter-spacing:-0.081px;">3099</div>
<div class="c" style="left:1217.02px;top:549.90px;letter-spacing:-0.139px;">8,8</div>
<div class="c" style="left:1240.31px;top:549.90px;letter-spacing:-0.130px;">3,08</div>
<div class="c" style="left:1145.40px;top:554.90px;letter-spacing:-0.191px;">G 6/8/140 SLT 100 mit BLH/</div>
<div class="c" style="left:1200.50px;top:554.90px;letter-spacing:-0.081px;">3099</div>
<div class="c" style="left:1217.02px;top:554.90px;letter-spacing:-0.139px;">8,8</div>
<div class="c" style="left:1240.31px;top:554.90px;letter-spacing:-0.130px;">3,08</div>
<div class="c" style="left:1145.40px;top:559.70px;letter-spacing:-0.191px;">G 6/8/140 SLT 100 mit BLH/</div>
<div class="c" style="left:1200.50px;top:559.70px;letter-spacing:-0.081px;">3099</div>
<div class="c" style="left:1217.02px;top:559.70px;letter-spacing:-0.139px;">8,8</div>
<div class="c" style="left:1240.31px;top:559.70px;letter-spacing:-0.130px;">3,08</div>
<div class="c" style="left:1145.40px;top:564.90px;letter-spacing:-0.191px;">G 6/8/140 SLT 100 mit BLH/</div>
<div class="c" style="left:1200.50px;top:564.90px;letter-spacing:-0.081px;">3099</div>
<div class="c" style="left:1217.02px;top:564.90px;letter-spacing:-0.139px;">8,8</div>
<div class="c" style="left:1240.31px;top:564.90px;letter-spacing:-0.130px;">3,08</div>
<div class="c" style="left:1267.99px;top:270.20px;letter-spacing:-0.113px;">Ladegerät</div>
<div class="c" style="left:1295.44px;top:270.20px;letter-spacing:-0.114px;">Preis</div>
<div class="c" style="left:1307.34px;top:270.20px;letter-spacing:-0.108px;">Ladezeit</div>
<div class="c" style="left:1326.14px;top:270.20px;letter-spacing:-0.112px;">Kosten/Ladung</div>
<div class="c" style="left:1261.00px;top:295.00px;letter-spacing:-0.089px;">G6/8/130 SLT 200</div>
<div class="c" style="left:1295.80px;top:295.00px;letter-spacing:-0.048px;">2818</div>
<div class="c" style="left:1311.82px;top:295.00px;letter-spacing:-0.139px;">8,8</div>
<div class="c" style="left:1335.71px;top:295.00px;letter-spacing:-0.130px;">3,38</div>
<div class="c" style="left:1261.00px;top:300.10px;letter-spacing:-0.089px;">G6/8/130 SLT 200</div>
<div class="c" style="left:1295.80px;top:300.10px;letter-spacing:-0.048px;">2818</div>
<div class="c" style="left:1311.82px;top:300.10px;letter-spacing:-0.139px;">8,8</div>
<div class="c" style="left:1335.71px;top:300.10px;letter-spacing:-0.130px;">3,38</div>
<div class="c" style="left:1261.00px;top:305.00px;letter-spacing:-0.089px;">G6/8/130 SLT 200</div>
<div class="c" style="left:1295.80px;top:305.00px;letter-spacing:-0.048px;">2818</div>
<div class="c" style="left:1311.82px;top:305.00px;letter-spacing:-0.139px;">8,8</div>
<div class="c" style="left:1335.71px;top:305.00px;letter-spacing:-0.130px;">3,38</div>
<div class="c" style="left:1261.00px;top:310.00px;letter-spacing:-0.089px;">G6/8/130 SLT 200</div>
<div class="c" style="left:1295.80px;top:310.00px;letter-spacing:-0.048px;">2818</div>
<div class="c" style="left:1311.82px;top:310.00px;letter-spacing:-0.139px;">8,8</div>
<div class="c" style="left:1335.71px;top:310.00px;letter-spacing:-0.130px;">3,38</div>
<div class="c" style="left:1261.00px;top:344.20px;letter-spacing:-0.089px;">G6/8/180 SLT 200</div>
<div class="c" style="left:1295.80px;top:344.20px;letter-spacing:-0.048px;">3091</div>
<div class="c" style="left:1311.82px;top:344.20px;letter-spacing:-0.139px;">8,8</div>
<div class="c" style="left:1335.71px;top:344.20px;letter-spacing:-0.130px;">3,84</div>
<div class="c" style="left:1261.00px;top:349.00px;letter-spacing:-0.089px;">G6/8/180 SLT 200</div>
<div class="c" style="left:1295.80px;top:349.00px;letter-spacing:-0.048px;">3091</div>
<div class="c" style="left:1311.82px;top:349.00px;letter-spacing:-0.139px;">8,8</div>
<div class="c" style="left:1335.71px;top:349.00px;letter-spacing:-0.130px;">3,84</div>
<div class="c" style="left:1261.00px;top:353.90px;letter-spacing:-0.089px;">G6/8/180 SLT 200</div>
<div class="c" style="left:1295.80px;top:353.90px;letter-spacing:-0.048px;">3091</div>
<div class="c" style="left:1311.82px;top:353.90px;letter-spacing:-0.139px;">8,8</div>
<div class="c" style="left:1335.71px;top:353.90px;letter-spacing:-0.130px;">3,84</div>
<div class="c" style="left:1261.00px;top:359.00px;letter-spacing:-0.089px;">G6/8/180 SLT 200</div>
<div class="c" style="left:1295.80px;top:359.00px;letter-spacing:-0.048px;">3091</div>
<div class="c" style="left:1311.82px;top:359.00px;letter-spacing:-0.139px;">8,8</div>
<div class="c" style="left:1335.71px;top:359.00px;letter-spacing:-0.130px;">3,84</div>
<div class="c" style="left:1261.00px;top:393.10px;letter-spacing:-0.089px;">G6/8/190 SLT 200</div>
<div class="c" style="left:1295.80px;top:393.10px;letter-spacing:-0.048px;">3364</div>
<div class="c" style="left:1311.82px;top:393.10px;letter-spacing:-0.139px;">8,8</div>
<div class="c" style="left:1335.71px;top:393.10px;letter-spacing:-0.130px;">3,02</div>
<div class="c" style="left:1261.00px;top:398.00px;letter-spacing:-0.089px;">G6/8/190 SLT 200</div>
<div class="c" style="left:1295.80px;top:398.00px;letter-spacing:-0.048px;">3364</div>
<div class="c" style="left:1311.82px;top:398.00px;letter-spacing:-0.139px;">8,8</div>
<div class="c" style="left:1335.71px;top:398.00px;letter-spacing:-0.130px;">3,02</div>
<div class="c" style="left:1261.00px;top:403.10px;letter-spacing:-0.089px;">G6/8/190 SLT 200</div>
<div class="c" style="left:1295.80px;top:403.10px;letter-spacing:-0.048px;">3364</div>
<div class="c" style="left:1311.82px;top:403.10px;letter-spacing:-0.139px;">8,8</div>
<div class="c" style="left:1335.71px;top:403.10px;letter-spacing:-0.130px;">3,02</div>
<div class="c" style="left:1261.00px;top:407.90px;letter-spacing:-0.089px;">G6/8/190 SLT 200</div>
<div class="c" style="left:1295.80px;top:407.90px;letter-spacing:-0.048px;">3364</div>
<div class="c" style="left:1311.82px;top:407.90px;letter-spacing:-0.139px;">8,8</div>
<div class="c" style="left:1335.71px;top:407.90px;letter-spacing:-0.130px;">3,02</div>
<div class="c" style="left:1261.00px;top:442.10px;letter-spacing:-0.089px;">G6/8/180 SLT 200</div>
<div class="c" style="left:1295.80px;top:442.10px;letter-spacing:-0.048px;">3091</div>
<div class="c" style="left:1311.82px;top:442.10px;letter-spacing:-0.139px;">8,8</div>
<div class="c" style="left:1335.71px;top:442.10px;letter-spacing:-0.130px;">3,84</div>
<div class="c" style="left:1261.00px;top:446.90px;letter-spacing:-0.089px;">G6/8/180 SLT 200</div>
<div class="c" style="left:1295.80px;top:446.90px;letter-spacing:-0.048px;">3091</div>
<div class="c" style="left:1311.82px;top:446.90px;letter-spacing:-0.139px;">8,8</div>
<div class="c" style="left:1335.71px;top:446.90px;letter-spacing:-0.130px;">3,84</div>
<div class="c" style="left:1261.00px;top:451.90px;letter-spacing:-0.089px;">G6/8/180 SLT 200</div>
<div class="c" style="left:1295.80px;top:451.90px;letter-spacing:-0.048px;">3091</div>
<div class="c" style="left:1311.82px;top:451.90px;letter-spacing:-0.139px;">8,8</div>
<div class="c" style="left:1335.71px;top:451.90px;letter-spacing:-0.130px;">3,84</div>
<div class="c" style="left:1261.00px;top:456.70px;letter-spacing:-0.089px;">G6/8/180 SLT 200</div>
<div class="c" style="left:1295.80px;top:456.70px;letter-spacing:-0.048px;">3091</div>
<div class="c" style="left:1311.82px;top:456.70px;letter-spacing:-0.139px;">8,8</div>
<div class="c" style="left:1335.71px;top:456.70px;letter-spacing:-0.130px;">3,84</div>
<div class="c" style="left:1261.00px;top:491.20px;letter-spacing:-0.089px;">G6/8/190 SLT 200</div>
<div class="c" style="left:1295.80px;top:491.20px;letter-spacing:-0.048px;">3364</div>
<div class="c" style="left:1311.82px;top:491.20px;letter-spacing:-0.139px;">8,8</div>
<div class="c" style="left:1335.71px;top:491.20px;letter-spacing:-0.130px;">3,02</div>
<div class="c" style="left:1261.00px;top:496.00px;letter-spacing:-0.089px;">G6/8/190 SLT 200</div>
<div class="c" style="left:1295.80px;top:496.00px;letter-spacing:-0.048px;">3364</div>
<div class="c" style="left:1311.82px;top:496.00px;letter-spacing:-0.139px;">8,8</div>
<div class="c" style="left:1335.71px;top:496.00px;letter-spacing:-0.130px;">3,02</div>
<div class="c" style="left:1261.00px;top:501.00px;letter-spacing:-0.089px;">G6/8/190 SLT 200</div>
<div class="c" style="left:1295.80px;top:501.00px;letter-spacing:-0.048px;">3364</div>
<div class="c" style="left:1311.82px;top:501.00px;letter-spacing:-0.139px;">8,8</div>
<div class="c" style="left:1335.71px;top:501.00px;letter-spacing:-0.130px;">3,02</div>
<div class="c" style="left:1261.00px;top:505.80px;letter-spacing:-0.089px;">G6/8/190 SLT 200</div>
<div class="c" style="left:1295.80px;top:505.80px;letter-spacing:-0.048px;">3364</div>
<div class="c" style="left:1311.82px;top:505.80px;letter-spacing:-0.139px;">8,8</div>
<div class="c" style="left:1335.71px;top:505.80px;letter-spacing:-0.130px;">3,02</div>
<div class="c" style="left:1261.00px;top:539.80px;letter-spacing:-0.089px;">G6/8/190 SLT 200</div>
<div class="c" style="left:1295.80px;top:539.80px;letter-spacing:-0.048px;">3364</div>
<div class="c" style="left:1311.82px;top:539.80px;letter-spacing:-0.139px;">8,8</div>
<div class="c" style="left:1335.71px;top:539.80px;letter-spacing:-0.130px;">3,02</div>
<div class="c" style="left:1261.00px;top:544.80px;letter-spacing:-0.089px;">G6/8/190 SLT 200</div>
<div class="c" style="left:1295.80px;top:544.80px;letter-spacing:-0.048px;">3364</div>
<div class="c" style="left:1311.82px;top:544.80px;letter-spacing:-0.139px;">8,8</div>
<div class="c" style="left:1335.71px;top:544.80px;letter-spacing:-0.130px;">3,02</div>
<div class="c" style="left:1261.00px;top:549.90px;letter-spacing:-0.089px;">G6/8/190 SLT 200</div>
<div class="c" style="left:1295.80px;top:549.90px;letter-spacing:-0.048px;">3364</div>
<div class="c" style="left:1311.82px;top:549.90px;letter-spacing:-0.139px;">8,8</div>
<div class="c" style="left:1335.71px;top:549.90px;letter-spacing:-0.130px;">3,02</div>
<div class="c" style="left:1261.00px;top:554.90px;letter-spacing:-0.089px;">G6/8/190 SLT 200</div>
<div class="c" style="left:1295.80px;top:554.90px;letter-spacing:-0.048px;">3364</div>
<div class="c" style="left:1311.82px;top:554.90px;letter-spacing:-0.139px;">8,8</div>
<div class="c" style="left:1335.71px;top:554.90px;letter-spacing:-0.130px;">3,02</div>
<div class="c" style="left:1371.79px;top:270.20px;letter-spacing:-0.113px;">Ladegerät</div>
<div class="c" style="left:1409.44px;top:270.20px;letter-spacing:-0.114px;">Preis</div>
<div class="c" style="left:1420.94px;top:270.20px;letter-spacing:-0.108px;">Ladezeit</div>
<div class="c" style="left:1439.54px;top:270.20px;letter-spacing:-0.112px;">Kosten/Ladung</div>
<div class="c" style="left:1356.80px;top:295.00px;letter-spacing:-0.104px;">G6/8/130 SLT 200 mit BLH/</div>
<div class="c" style="left:1409.70px;top:295.00px;letter-spacing:-0.015px;">3248</div>
<div class="c" style="left:1427.33px;top:295.00px;">7</div>
<div class="c" style="left:1449.31px;top:295.00px;letter-spacing:-0.130px;">3,08</div>
<div class="c" style="left:1356.80px;top:300.10px;letter-spacing:-0.104px;">G6/8/130 SLT 200 mit BLH/</div>
<div class="c" style="left:1409.70px;top:300.10px;letter-spacing:-0.015px;">3248</div>
<div class="c" style="left:1427.33px;top:300.10px;">7</div>
<div class="c" style="left:1449.31px;top:300.10px;letter-spacing:-0.130px;">3,08</div>
<div class="c" style="left:1356.80px;top:305.00px;letter-spacing:-0.104px;">G6/8/130 SLT 200 mit BLH/</div>
<div class="c" style="left:1409.70px;top:305.00px;letter-spacing:-0.015px;">3248</div>
<div class="c" style="left:1427.33px;top:305.00px;">7</div>
<div class="c" style="left:1449.31px;top:305.00px;letter-spacing:-0.130px;">3,08</div>
<div class="c" style="left:1356.80px;top:310.00px;letter-spacing:-0.104px;">G6/8/130 SLT 200 mit BLH/</div>
<div class="c" style="left:1409.70px;top:310.00px;letter-spacing:-0.015px;">3248</div>
<div class="c" style="left:1427.33px;top:310.00px;">7</div>
<div class="c" style="left:1449.31px;top:310.00px;letter-spacing:-0.130px;">3,08</div>
<div class="c" style="left:1356.80px;top:344.20px;letter-spacing:-0.104px;">G6/8/180 SLT 200 mit BLH/</div>
<div class="c" style="left:1409.70px;top:344.20px;letter-spacing:-0.015px;">3817</div>
<div class="c" style="left:1427.33px;top:344.20px;">7</div>
<div class="c" style="left:1449.31px;top:344.20px;letter-spacing:-0.130px;">3,87</div>
<div class="c" style="left:1356.80px;top:349.00px;letter-spacing:-0.104px;">G6/8/180 SLT 200 mit BLH/</div>
<div class="c" style="left:1409.70px;top:349.00px;letter-spacing:-0.015px;">3817</div>
<div class="c" style="left:1427.33px;top:349.00px;">7</div>
<div class="c" style="left:1449.31px;top:349.00px;letter-spacing:-0.130px;">3,87</div>
<div class="c" style="left:1356.80px;top:353.90px;letter-spacing:-0.104px;">G6/8/180 SLT 200 mit BLH/</div>
<div class="c" style="left:1409.70px;top:353.90px;letter-spacing:-0.015px;">3817</div>
<div class="c" style="left:1427.33px;top:353.90px;">7</div>
<div class="c" style="left:1449.31px;top:353.90px;letter-spacing:-0.130px;">3,87</div>
<div class="c" style="left:1356.80px;top:359.00px;letter-spacing:-0.104px;">G6/8/180 SLT 200 mit BLH/</div>
<div class="c" style="left:1409.70px;top:359.00px;letter-spacing:-0.015px;">3817</div>
<div class="c" style="left:1427.33px;top:359.00px;">7</div>
<div class="c" style="left:1449.31px;top:359.00px;letter-spacing:-0.130px;">3,87</div>
<div class="c" style="left:1356.80px;top:393.10px;letter-spacing:-0.104px;">G6/8/190 SLT 200 mit BLH/</div>
<div class="c" style="left:1409.70px;top:393.10px;letter-spacing:-0.015px;">3790</div>
<div class="c" style="left:1427.33px;top:393.10px;">7</div>
<div class="c" style="left:1449.31px;top:393.10px;letter-spacing:-0.130px;">3,08</div>
<div class="c" style="left:1356.80px;top:398.00px;letter-spacing:-0.104px;">G6/8/190 SLT 200 mit BLH/</div>
<div class="c" style="left:1409.70px;top:398.00px;letter-spacing:-0.015px;">3790</div>
<div class="c" style="left:1427.33px;top:398.00px;">7</div>
<div class="c" style="left:1449.31px;top:398.00px;letter-spacing:-0.130px;">3,08</div>
<div class="c" style="left:1356.80px;top:403.10px;letter-spacing:-0.104px;">G6/8/190 SLT 200 mit BLH/</div>
<div class="c" style="left:1409.70px;top:403.10px;letter-spacing:-0.015px;">3790</div>
<div class="c" style="left:1427.33px;top:403.10px;">7</div>
<div class="c" style="left:1449.31px;top:403.10px;letter-spacing:-0.130px;">3,08</div>
<div class="c" style="left:1356.80px;top:407.90px;letter-spacing:-0.104px;">G6/8/190 SLT 200 mit BLH/</div>
<div class="c" style="left:1409.70px;top:407.90px;letter-spacing:-0.015px;">3790</div>
<div class="c" style="left:1427.33px;top:407.90px;">7</div>
<div class="c" style="left:1449.31px;top:407.90px;letter-spacing:-0.130px;">3,08</div>
<div class="c" style="left:1356.80px;top:442.10px;letter-spacing:-0.104px;">G6/8/180 SLT 200 mit BLH/</div>
<div class="c" style="left:1409.70px;top:442.10px;letter-spacing:-0.015px;">3817</div>
<div class="c" style="left:1427.33px;top:442.10px;">7</div>
<div class="c" style="left:1449.31px;top:442.10px;letter-spacing:-0.130px;">3,87</div>
<div class="c" style="left:1356.80px;top:446.90px;letter-spacing:-0.104px;">G6/8/180 SLT 200 mit BLH/</div>
<div class="c" style="left:1409.70px;top:446.90px;letter-spacing:-0.015px;">3817</div>
<div class="c" style="left:1427.33px;top:446.90px;">7</div>
<div class="c" style="left:1449.31px;top:446.90px;letter-spacing:-0.130px;">3,87</div>
<div class="c" style="left:1356.80px;top:451.90px;letter-spacing:-0.104px;">G6/8/180 SLT 200 mit BLH/</div>
<div class="c" style="left:1409.70px;top:451.90px;letter-spacing:-0.015px;">3817</div>
<div class="c" style="left:1427.33px;top:451.90px;">7</div>
<div class="c" style="left:1449.31px;top:451.90px;letter-spacing:-0.130px;">3,87</div>
<div class="c" style="left:1356.80px;top:456.70px;letter-spacing:-0.104px;">G6/8/180 SLT 200 mit BLH/</div>
<div class="c" style="left:1409.70px;top:456.70px;letter-spacing:-0.015px;">3817</div>
<div class="c" style="left:1427.33px;top:456.70px;">7</div>
<div class="c" style="left:1449.31px;top:456.70px;letter-spacing:-0.130px;">3,87</div>
<div class="c" style="left:1356.80px;top:491.20px;letter-spacing:-0.104px;">G6/8/190 SLT 200 mit BLH/</div>
<div class="c" style="left:1409.70px;top:491.20px;letter-spacing:-0.015px;">3790</div>
<div class="c" style="left:1427.33px;top:491.20px;">7</div>
<div class="c" style="left:1449.31px;top:491.20px;letter-spacing:-0.130px;">3,08</div>
<div class="c" style="left:1356.80px;top:496.00px;letter-spacing:-0.104px;">G6/8/190 SLT 200 mit BLH/</div>
<div class="c" style="left:1409.70px;top:496.00px;letter-spacing:-0.015px;">3790</div>
<div class="c" style="left:1427.33px;top:496.00px;">7</div>
<div class="c" style="left:1449.31px;top:496.00px;letter-spacing:-0.130px;">3,08</div>
<div class="c" style="left:1356.80px;top:501.00px;letter-spacing:-0.104px;">G6/8/190 SLT 200 mit BLH/</div>
<div class="c" style="left:1409.70px;top:501.00px;letter-spacing:-0.015px;">3790</div>
<div class="c" style="left:1427.33px;top:501.00px;">7</div>
<div class="c" style="left:1449.31px;top:501.00px;letter-spacing:-0.130px;">3,08</div>
<div class="c" style="left:1356.80px;top:505.80px;letter-spacing:-0.104px;">G6/8/190 SLT 200 mit BLH/</div>
<div class="c" style="left:1409.70px;top:505.80px;letter-spacing:-0.015px;">3790</div>
<div class="c" style="left:1427.33px;top:505.80px;">7</div>
<div class="c" style="left:1449.31px;top:505.80px;letter-spacing:-0.130px;">3,08</div>
<div class="c" style="left:1356.80px;top:539.80px;letter-spacing:-0.104px;">G6/8/190 SLT 200 mit BLH/</div>
<div class="c" style="left:1409.70px;top:539.80px;letter-spacing:-0.015px;">3790</div>
<div class="c" style="left:1427.33px;top:539.80px;">7</div>
<div class="c" style="left:1449.31px;top:539.80px;letter-spacing:-0.130px;">3,08</div>
<div class="c" style="left:1356.80px;top:544.80px;letter-spacing:-0.104px;">G6/8/190 SLT 200 mit BLH/</div>
<div class="c" style="left:1409.70px;top:544.80px;letter-spacing:-0.015px;">3790</div>
<div class="c" style="left:1427.33px;top:544.80px;">7</div>
<div class="c" style="left:1449.31px;top:544.80px;letter-spacing:-0.130px;">3,08</div>
<div class="c" style="left:1356.80px;top:549.90px;letter-spacing:-0.104px;">G6/8/190 SLT 200 mit BLH/</div>
<div class="c" style="left:1409.70px;top:549.90px;letter-spacing:-0.015px;">3790</div>
<div class="c" style="left:1427.33px;top:549.90px;">7</div>
<div class="c" style="left:1449.31px;top:549.90px;letter-spacing:-0.130px;">3,08</div>
<div class="c" style="left:1356.80px;top:554.90px;letter-spacing:-0.104px;">G6/8/190 SLT 200 mit BLH/</div>
<div class="c" style="left:1409.70px;top:554.90px;letter-spacing:-0.015px;">3790</div>
<div class="c" style="left:1427.33px;top:554.90px;">7</div>
<div class="c" style="left:1449.31px;top:554.90px;letter-spacing:-0.130px;">3,08</div>
<div class="c" style="left:633.70px;top:595.00px;letter-spacing:0.079px;">Zins d.€ Klientenlohn</div>
<div class="c b" style="left:529.90px;top:609.10px;letter-spacing:0.104px;">Fixdaten</div>
<div class="c" style="left:608.00px;top:609.10px;letter-spacing:0.046px;">Li-Ionen</div>
<div class="c" style="left:638.70px;top:609.10px;letter-spacing:-0.175px;">Blei ohne Aquam.</div>
<div class="c" style="left:676.00px;top:609.10px;letter-spacing:-0.379px;">mit Aquam.</div>
<div class="r" style="left:607px;top:614px;width:87px;height:1px;background:#000"></div>
<div class="c" style="left:638.15px;top:615.10px;letter-spacing:-0.032px;">Wasserkosten</div>
<div class="c" style="left:517.90px;top:620.00px;letter-spacing:-0.054px;">Energiekosten in €/kwh</div>
<div class="c" style="left:575.82px;top:620.00px;letter-spacing:-0.139px;">0,1</div>
<div class="c" style="left:625.62px;top:620.00px;letter-spacing:-0.139px;">4,8</div>
<div class="c" style="left:666.61px;top:620.00px;letter-spacing:-0.130px;">21,6</div>
<div class="c" style="left:685.61px;top:620.00px;letter-spacing:-0.130px;">21,6</div>
<div class="c b" style="left:529.90px;top:628.90px;letter-spacing:0.021px;">Wartung</div>
<div class="c" style="left:639.15px;top:628.90px;letter-spacing:-0.079px;">Arbeitskosten</div>
<div class="c" style="left:521.75px;top:639.00px;letter-spacing:-0.109px;">Kosten Wasser (l)€</div>
<div class="c" style="left:575.82px;top:639.00px;letter-spacing:-0.139px;">0,8</div>
<div class="c" style="left:626.78px;top:639.00px;letter-spacing:-0.222px;">60</div>
<div class="c" style="left:667.16px;top:639.00px;letter-spacing:-0.167px;">360</div>
<div class="c" style="left:686.66px;top:639.00px;letter-spacing:-0.167px;">270</div>
<div class="r" style="left:607px;top:644px;width:87px;height:1px;background:#000"></div>
<div class="c" style="left:513.00px;top:649.10px;letter-spacing:-0.035px;">Nachfüllzeit pro Batterie in h</div>
<div class="c" style="left:575.82px;top:649.10px;letter-spacing:-0.139px;">0,8</div>
<div class="c" style="left:591.00px;top:649.10px;letter-spacing:-0.368px;">Summe</div>
<div class="c" style="left:623.61px;top:649.10px;letter-spacing:-0.130px;">84,8</div>
<div class="c" style="left:649.20px;top:649.10px;letter-spacing:-0.125px;">381,6</div>
<div class="c" style="left:679.00px;top:649.10px;letter-spacing:-0.125px;">291,6</div>
<div class="r" style="left:607px;top:654px;width:87px;height:1px;background:#000"></div>
<div class="c" style="left:511.00px;top:659.10px;letter-spacing:-0.244px;">Wasserverbrauch pro Zelle/Zyklus</div>
<div class="c" style="left:574.11px;top:659.10px;letter-spacing:-0.130px;">0,01</div>
<div class="c" style="left:526.80px;top:669.00px;letter-spacing:0.233px;">Arbeitskraft</div>
<div class="c" style="left:575.78px;top:669.20px;letter-spacing:-0.222px;">40</div>
<div class="c" style="left:515.85px;top:679.00px;letter-spacing:0.021px;">Wartungszyklus Li-Ionen</div>
<div class="c" style="left:575.78px;top:679.20px;letter-spacing:-0.222px;">60</div>
<div class="c" style="left:513.80px;top:689.10px;letter-spacing:-0.033px;">Wartungszyklus Bleibatterie</div>
<div class="c" style="left:576.83px;top:689.00px;">7</div>
<div class="c" style="left:582.90px;top:703.10px;letter-spacing:-0.019px;">Verbrauch in kwh/h</div>
<div class="c b" style="left:514.80px;top:708.20px;letter-spacing:-0.065px;">Verbrauch nach Tonnage</div>
<div class="c" style="left:570.10px;top:708.20px;letter-spacing:-0.201px;">leicht</div>
<div class="c" style="left:593.20px;top:708.20px;letter-spacing:-0.267px;">mittel</div>
<div class="c" style="left:607.80px;top:708.20px;letter-spacing:-0.221px;">schwer</div>
<div class="c" style="left:536.22px;top:718.10px;letter-spacing:-0.139px;">1,3</div>
<div class="c" style="left:594.92px;top:718.10px;letter-spacing:-0.139px;">4,3</div>
<div class="c" style="left:536.22px;top:728.00px;letter-spacing:-0.139px;">1,8</div>
<div class="c" style="left:594.92px;top:728.20px;letter-spacing:-0.139px;">4,3</div>
<div class="c" style="left:522.00px;top:738.10px;letter-spacing:-0.189px;">3 x abw. 4 und 1,8 h</div>
<div class="c" style="left:594.92px;top:737.90px;letter-spacing:-0.139px;">4,3</div>
<div class="c" style="left:530.90px;top:743.00px;letter-spacing:-0.064px;">3 und 1,8</div>
<div class="c" style="left:594.92px;top:743.10px;letter-spacing:-0.139px;">4,4</div>
<div class="c" style="left:530.90px;top:748.10px;letter-spacing:-0.064px;">4 und 1,8</div>
<div class="c" style="left:594.92px;top:748.00px;letter-spacing:-0.139px;">4,8</div>
<div class="c" style="left:527.90px;top:757.20px;letter-spacing:-0.268px;">3 und 1,8 sch</div>
<div class="c" style="left:594.92px;top:757.00px;letter-spacing:-0.139px;">4,7</div>
</div></div></div>
</body></html>
